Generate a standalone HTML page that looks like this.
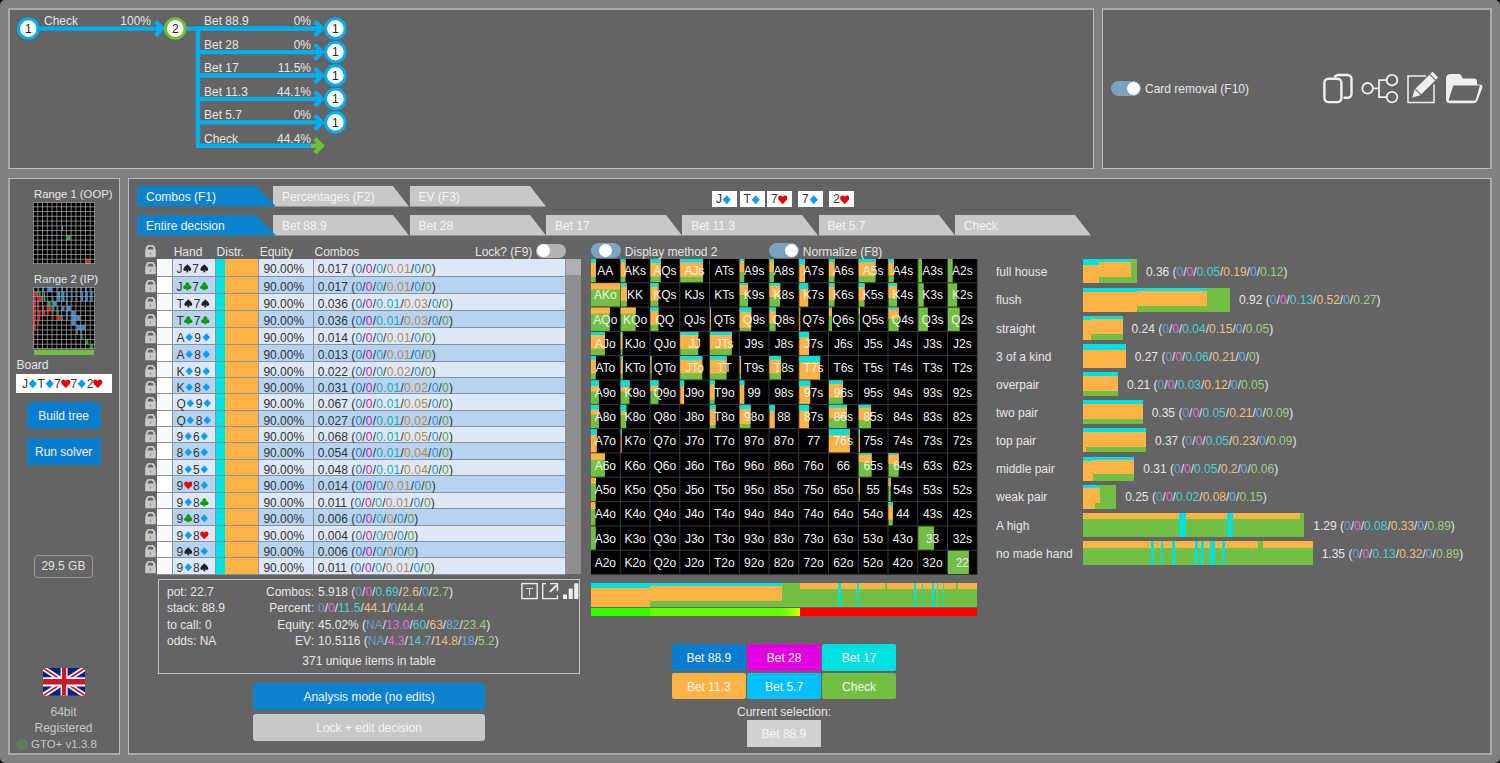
<!DOCTYPE html><html><head><meta charset="utf-8"><style>
html,body{margin:0;padding:0;}
body{width:1500px;height:763px;overflow:hidden;position:relative;background:#808080;font-family:"Liberation Sans", sans-serif;font-size:12px;color:#e6e6e6;}
div{box-sizing:border-box;}
.t{position:absolute;white-space:nowrap;line-height:14px;}
.panel{position:absolute;background:#646464;border:2px solid #a9a9a9;}
</style></head><body><div style="position:absolute;left:8px;top:8px;width:1086px;height:161px;background:#646464;border-left:2px solid #a9a9a9;border-top:2px solid #a9a9a9;border-right:1px solid #bcbcbc;border-bottom:1px solid #bcbcbc;"></div><div style="position:absolute;left:1102px;top:8px;width:390px;height:161px;background:#646464;border-left:1px solid #bcbcbc;border-top:2px solid #a9a9a9;border-right:2px solid #a9a9a9;border-bottom:1px solid #bcbcbc;"></div><div style="position:absolute;left:8px;top:178px;width:112px;height:577px;background:#646464;border-left:2px solid #a9a9a9;border-top:1px solid #bcbcbc;border-right:1px solid #bcbcbc;border-bottom:2px solid #a9a9a9;"></div><div style="position:absolute;left:128px;top:178px;width:1364px;height:577px;background:#646464;border-left:1px solid #bcbcbc;border-top:1px solid #bcbcbc;border-right:2px solid #a9a9a9;border-bottom:2px solid #a9a9a9;"></div><svg style="position:absolute;left:0;top:0" width="1500" height="763"><path d="M0 0 H5 A5 5 0 0 0 0 5 Z" fill="#000"/><path d="M1500 0 H1495 A5 5 0 0 1 1500 5 Z" fill="#000"/><path d="M1500 763 H1495 A5 5 0 0 0 1500 758 Z" fill="#000"/><path d="M0 763 H5 A5 5 0 0 1 0 758 Z" fill="#000"/></svg><svg style="position:absolute;left:0;top:0" width="1100" height="170"><line x1="38" y1="28.6" x2="162" y2="28.6" stroke="#00aeef" stroke-width="4.4"/><polyline points="155.5,21.5 162.5,28.6 155.5,35.7" fill="none" stroke="#00aeef" stroke-width="4.4" stroke-linecap="butt" stroke-linejoin="miter"/><line x1="186" y1="28.6" x2="322" y2="28.6" stroke="#00aeef" stroke-width="4.4"/><line x1="198" y1="28.6" x2="198" y2="147.8" stroke="#00aeef" stroke-width="4.4"/><line x1="196" y1="28.6" x2="320" y2="28.6" stroke="#00aeef" stroke-width="4.4"/><polyline points="314.8,21.400000000000002 321.8,28.6 314.8,35.800000000000004" fill="none" stroke="#00aeef" stroke-width="4.4" stroke-linejoin="miter"/><line x1="196" y1="52.1" x2="320" y2="52.1" stroke="#00aeef" stroke-width="4.4"/><polyline points="314.8,44.9 321.8,52.1 314.8,59.300000000000004" fill="none" stroke="#00aeef" stroke-width="4.4" stroke-linejoin="miter"/><line x1="196" y1="75.5" x2="320" y2="75.5" stroke="#00aeef" stroke-width="4.4"/><polyline points="314.8,68.3 321.8,75.5 314.8,82.7" fill="none" stroke="#00aeef" stroke-width="4.4" stroke-linejoin="miter"/><line x1="196" y1="98.9" x2="320" y2="98.9" stroke="#00aeef" stroke-width="4.4"/><polyline points="314.8,91.7 321.8,98.9 314.8,106.10000000000001" fill="none" stroke="#00aeef" stroke-width="4.4" stroke-linejoin="miter"/><line x1="196" y1="122.4" x2="320" y2="122.4" stroke="#00aeef" stroke-width="4.4"/><polyline points="314.8,115.2 321.8,122.4 314.8,129.6" fill="none" stroke="#00aeef" stroke-width="4.4" stroke-linejoin="miter"/><line x1="196" y1="145.8" x2="311" y2="145.8" stroke="#00aeef" stroke-width="4.4"/><line x1="311" y1="145.8" x2="320" y2="145.8" stroke="#6cbf3c" stroke-width="4.4"/><polyline points="314.8,138.60000000000002 321.8,145.8 314.8,153.0" fill="none" stroke="#6cbf3c" stroke-width="4.4" stroke-linejoin="miter"/><circle cx="28.3" cy="28.6" r="9.8" fill="#fff" stroke="#00aeef" stroke-width="3"/><circle cx="175.3" cy="28.6" r="9.8" fill="#fff" stroke="#6cbf3c" stroke-width="3"/><circle cx="335.4" cy="28.6" r="9.8" fill="#fff" stroke="#00aeef" stroke-width="3"/><circle cx="335.4" cy="52.1" r="9.8" fill="#fff" stroke="#00aeef" stroke-width="3"/><circle cx="335.4" cy="75.5" r="9.8" fill="#fff" stroke="#00aeef" stroke-width="3"/><circle cx="335.4" cy="98.9" r="9.8" fill="#fff" stroke="#00aeef" stroke-width="3"/><circle cx="335.4" cy="122.4" r="9.8" fill="#fff" stroke="#00aeef" stroke-width="3"/></svg><div class="t" style="left:18.3px;top:21.8px;width:20px;text-align:center;color:#222;font-size:12px;">1</div><div class="t" style="left:165.3px;top:21.8px;width:20px;text-align:center;color:#222;font-size:12px;">2</div><div class="t" style="left:325.4px;top:21.8px;width:20px;text-align:center;color:#222;font-size:12px;">1</div><div class="t" style="left:325.4px;top:45.300000000000004px;width:20px;text-align:center;color:#222;font-size:12px;">1</div><div class="t" style="left:325.4px;top:68.7px;width:20px;text-align:center;color:#222;font-size:12px;">1</div><div class="t" style="left:325.4px;top:92.10000000000001px;width:20px;text-align:center;color:#222;font-size:12px;">1</div><div class="t" style="left:325.4px;top:115.60000000000001px;width:20px;text-align:center;color:#222;font-size:12px;">1</div><div class="t" style="left:44px;top:14.2px;color:#e6e6e6;">Check</div><div class="t" style="left:100px;top:14.2px;width:51px;text-align:right;">100%</div><div class="t" style="left:204px;top:14.3px;">Bet 88.9</div><div class="t" style="left:250px;top:14.3px;width:61px;text-align:right;">0%</div><div class="t" style="left:204px;top:37.8px;">Bet 28</div><div class="t" style="left:250px;top:37.8px;width:61px;text-align:right;">0%</div><div class="t" style="left:204px;top:61.2px;">Bet 17</div><div class="t" style="left:250px;top:61.2px;width:61px;text-align:right;">11.5%</div><div class="t" style="left:204px;top:84.60000000000001px;">Bet 11.3</div><div class="t" style="left:250px;top:84.60000000000001px;width:61px;text-align:right;">44.1%</div><div class="t" style="left:204px;top:108.10000000000001px;">Bet 5.7</div><div class="t" style="left:250px;top:108.10000000000001px;width:61px;text-align:right;">0%</div><div class="t" style="left:204px;top:131.5px;">Check</div><div class="t" style="left:250px;top:131.5px;width:61px;text-align:right;">44.4%</div><div style="position:absolute;left:1110.9px;top:81.1px;width:29.7px;height:15.1px;border-radius:7.55px;background:#7aa3be;"></div><div style="position:absolute;left:1126.9px;top:82.14999999999999px;width:13px;height:13px;border-radius:50%;background:#fff;"></div><div class="t" style="left:1145px;top:82px;color:#e6e6e6;">Card removal (F10)</div><svg style="position:absolute;left:1310px;top:60px" width="185" height="55" viewBox="1310 60 185 55"><rect x="1334.3" y="75" width="17.2" height="22.8" rx="4" fill="none" stroke="#efefef" stroke-width="2.4"/><rect x="1322.5" y="77.5" width="21" height="27" rx="4.5" fill="#646464"/><rect x="1324.4" y="78.8" width="17" height="23.3" rx="4" fill="none" stroke="#efefef" stroke-width="2.4"/><circle cx="1367.6" cy="88.3" r="5.3" fill="none" stroke="#efefef" stroke-width="1.8"/><circle cx="1392" cy="80.2" r="5.3" fill="none" stroke="#efefef" stroke-width="1.8"/><circle cx="1392" cy="97.1" r="5.3" fill="none" stroke="#efefef" stroke-width="1.8"/><path d="M1372.9 88.3 H1379 M1379 79.5 V97.8 M1378.1 80.2 H1386.7 M1378.1 97.1 H1386.7" fill="none" stroke="#efefef" stroke-width="1.8"/><path d="M1426 75.9 H1408 V102.6 H1434 V84.5" fill="none" stroke="#efefef" stroke-width="1.5"/><path d="M1412.3 97.6 L1414.6 89.6 L1432.5 71.7 L1438.2 77.4 L1420.3 95.3 Z" fill="#efefef"/><path d="M1415.3 89.2 L1421 94.9" stroke="#646464" stroke-width="1.2"/><path d="M1429.8 74.4 L1435.5 80.1" stroke="#646464" stroke-width="1.2"/><path d="M1446 79 Q1446 74 1451 74 H1458.5 Q1460.5 74 1461.5 76 L1462.7 78.5 H1474 Q1477 78.5 1477 81.5 V84.5 H1479.5 Q1483.3 84.5 1482.3 88 L1477.5 100.3 Q1476.5 103.3 1473.5 103.3 H1450.5 Q1446 103.3 1446 99 Z" fill="#efefef"/><path d="M1453.3 85.5 H1480 L1475.5 100.6 H1448.5 Z" fill="#646464"/></svg><div class="t" style="left:34px;top:187px;font-size:11.3px;">Range 1 (OOP)</div><svg style="position:absolute;left:33px;top:202px" width="62" height="62"><rect x="0" y="0" width="62" height="62" fill="#000"/><rect x="33.86" y="33.38" width="3.82" height="4.77" fill="#1aaa3a"/><rect x="28.85" y="23.85" width="1.19" height="4.77" fill="#3a8ad8"/><rect x="52.94" y="57.23" width="4.05" height="4.77" fill="#e8202a"/><line x1="0.50" y1="0" x2="0.50" y2="62" stroke="#b0b0b0" stroke-width="1" opacity="0.7"/><line x1="0" y1="0.50" x2="62" y2="0.50" stroke="#b0b0b0" stroke-width="1" opacity="0.7"/><line x1="4.77" y1="0" x2="4.77" y2="62" stroke="#b0b0b0" stroke-width="1" opacity="0.7"/><line x1="0" y1="4.77" x2="62" y2="4.77" stroke="#b0b0b0" stroke-width="1" opacity="0.7"/><line x1="9.54" y1="0" x2="9.54" y2="62" stroke="#b0b0b0" stroke-width="1" opacity="0.7"/><line x1="0" y1="9.54" x2="62" y2="9.54" stroke="#b0b0b0" stroke-width="1" opacity="0.7"/><line x1="14.31" y1="0" x2="14.31" y2="62" stroke="#b0b0b0" stroke-width="1" opacity="0.7"/><line x1="0" y1="14.31" x2="62" y2="14.31" stroke="#b0b0b0" stroke-width="1" opacity="0.7"/><line x1="19.08" y1="0" x2="19.08" y2="62" stroke="#b0b0b0" stroke-width="1" opacity="0.7"/><line x1="0" y1="19.08" x2="62" y2="19.08" stroke="#b0b0b0" stroke-width="1" opacity="0.7"/><line x1="23.85" y1="0" x2="23.85" y2="62" stroke="#b0b0b0" stroke-width="1" opacity="0.7"/><line x1="0" y1="23.85" x2="62" y2="23.85" stroke="#b0b0b0" stroke-width="1" opacity="0.7"/><line x1="28.62" y1="0" x2="28.62" y2="62" stroke="#b0b0b0" stroke-width="1" opacity="0.7"/><line x1="0" y1="28.62" x2="62" y2="28.62" stroke="#b0b0b0" stroke-width="1" opacity="0.7"/><line x1="33.38" y1="0" x2="33.38" y2="62" stroke="#b0b0b0" stroke-width="1" opacity="0.7"/><line x1="0" y1="33.38" x2="62" y2="33.38" stroke="#b0b0b0" stroke-width="1" opacity="0.7"/><line x1="38.15" y1="0" x2="38.15" y2="62" stroke="#b0b0b0" stroke-width="1" opacity="0.7"/><line x1="0" y1="38.15" x2="62" y2="38.15" stroke="#b0b0b0" stroke-width="1" opacity="0.7"/><line x1="42.92" y1="0" x2="42.92" y2="62" stroke="#b0b0b0" stroke-width="1" opacity="0.7"/><line x1="0" y1="42.92" x2="62" y2="42.92" stroke="#b0b0b0" stroke-width="1" opacity="0.7"/><line x1="47.69" y1="0" x2="47.69" y2="62" stroke="#b0b0b0" stroke-width="1" opacity="0.7"/><line x1="0" y1="47.69" x2="62" y2="47.69" stroke="#b0b0b0" stroke-width="1" opacity="0.7"/><line x1="52.46" y1="0" x2="52.46" y2="62" stroke="#b0b0b0" stroke-width="1" opacity="0.7"/><line x1="0" y1="52.46" x2="62" y2="52.46" stroke="#b0b0b0" stroke-width="1" opacity="0.7"/><line x1="57.23" y1="0" x2="57.23" y2="62" stroke="#b0b0b0" stroke-width="1" opacity="0.7"/><line x1="0" y1="57.23" x2="62" y2="57.23" stroke="#b0b0b0" stroke-width="1" opacity="0.7"/><line x1="61.50" y1="0" x2="61.50" y2="62" stroke="#b0b0b0" stroke-width="1" opacity="0.7"/><line x1="0" y1="61.50" x2="62" y2="61.50" stroke="#b0b0b0" stroke-width="1" opacity="0.7"/></svg><div class="t" style="left:34px;top:272px;font-size:11.3px;">Range 2 (IP)</div><svg style="position:absolute;left:33px;top:287px" width="62" height="62"><rect x="0" y="0" width="62" height="62" fill="#000"/><rect x="0.48" y="0.00" width="0.95" height="4.77" fill="#1aaa3a"/><rect x="5.25" y="0.00" width="0.95" height="4.77" fill="#3a8ad8"/><rect x="10.02" y="0.00" width="0.95" height="4.77" fill="#3a8ad8"/><rect x="14.78" y="0.00" width="4.29" height="4.77" fill="#3a8ad8"/><rect x="24.32" y="0.00" width="0.95" height="4.77" fill="#3a8ad8"/><rect x="29.09" y="0.00" width="0.95" height="4.77" fill="#3a8ad8"/><rect x="33.86" y="0.00" width="0.95" height="4.77" fill="#3a8ad8"/><rect x="38.63" y="0.00" width="0.95" height="4.77" fill="#3a8ad8"/><rect x="43.40" y="0.00" width="0.95" height="4.77" fill="#3a8ad8"/><rect x="48.17" y="0.00" width="0.95" height="4.77" fill="#3a8ad8"/><rect x="52.94" y="0.00" width="0.95" height="4.77" fill="#3a8ad8"/><rect x="57.71" y="0.00" width="0.95" height="4.77" fill="#3a8ad8"/><rect x="0.48" y="4.77" width="3.82" height="4.77" fill="#e8202a"/><rect x="5.72" y="4.77" width="1.91" height="4.77" fill="#1aaa3a"/><rect x="10.49" y="4.77" width="1.43" height="4.77" fill="#3a8ad8"/><rect x="24.32" y="4.77" width="2.86" height="4.77" fill="#3a8ad8"/><rect x="29.09" y="4.77" width="2.38" height="4.77" fill="#3a8ad8"/><rect x="33.86" y="4.77" width="0.95" height="4.77" fill="#3a8ad8"/><rect x="38.63" y="4.77" width="0.95" height="4.77" fill="#3a8ad8"/><rect x="43.40" y="4.77" width="0.95" height="4.77" fill="#3a8ad8"/><rect x="48.17" y="4.77" width="1.91" height="4.77" fill="#3a8ad8"/><rect x="52.94" y="4.77" width="1.91" height="4.77" fill="#3a8ad8"/><rect x="57.71" y="4.77" width="1.91" height="4.77" fill="#3a8ad8"/><rect x="0.48" y="9.54" width="2.38" height="4.77" fill="#e8202a"/><rect x="5.25" y="9.54" width="3.82" height="4.77" fill="#e8202a"/><rect x="10.49" y="9.54" width="1.91" height="4.77" fill="#1aaa3a"/><rect x="19.55" y="9.54" width="0.95" height="4.77" fill="#3a8ad8"/><rect x="24.32" y="9.54" width="2.86" height="4.77" fill="#3a8ad8"/><rect x="29.09" y="9.54" width="2.38" height="4.77" fill="#3a8ad8"/><rect x="33.86" y="9.54" width="0.95" height="4.77" fill="#3a8ad8"/><rect x="38.63" y="9.54" width="0.95" height="4.77" fill="#3a8ad8"/><rect x="43.40" y="9.54" width="0.95" height="4.77" fill="#3a8ad8"/><rect x="48.17" y="9.54" width="1.91" height="4.77" fill="#3a8ad8"/><rect x="52.94" y="9.54" width="1.91" height="4.77" fill="#3a8ad8"/><rect x="57.71" y="9.54" width="1.91" height="4.77" fill="#3a8ad8"/><rect x="0.48" y="14.31" width="2.38" height="4.77" fill="#e8202a"/><rect x="5.25" y="14.31" width="0.95" height="4.77" fill="#e8202a"/><rect x="14.78" y="14.31" width="2.86" height="4.77" fill="#1aaa3a"/><rect x="19.55" y="14.31" width="3.82" height="4.77" fill="#3a8ad8"/><rect x="33.86" y="14.31" width="0.95" height="4.77" fill="#3a8ad8"/><rect x="0.48" y="19.08" width="2.38" height="4.77" fill="#e8202a"/><rect x="5.25" y="19.08" width="0.95" height="4.77" fill="#e8202a"/><rect x="10.02" y="19.08" width="0.95" height="4.77" fill="#e8202a"/><rect x="14.78" y="19.08" width="3.34" height="4.77" fill="#e8202a"/><rect x="19.55" y="19.08" width="1.91" height="4.77" fill="#1aaa3a"/><rect x="24.32" y="19.08" width="0.95" height="4.77" fill="#3a8ad8"/><rect x="29.09" y="19.08" width="2.38" height="4.77" fill="#3a8ad8"/><rect x="33.86" y="19.08" width="3.82" height="4.77" fill="#3a8ad8"/><rect x="0.48" y="23.85" width="2.38" height="4.77" fill="#e8202a"/><rect x="5.25" y="23.85" width="2.38" height="4.77" fill="#e8202a"/><rect x="10.02" y="23.85" width="2.38" height="4.77" fill="#e8202a"/><rect x="14.78" y="23.85" width="0.95" height="4.77" fill="#e8202a"/><rect x="19.55" y="23.85" width="0.95" height="4.77" fill="#e8202a"/><rect x="24.32" y="23.85" width="1.43" height="4.77" fill="#1aaa3a"/><rect x="33.86" y="23.85" width="0.95" height="4.77" fill="#3a8ad8"/><rect x="38.63" y="23.85" width="3.82" height="4.77" fill="#3a8ad8"/><rect x="0.48" y="28.62" width="2.38" height="4.77" fill="#e8202a"/><rect x="5.25" y="28.62" width="1.91" height="4.77" fill="#e8202a"/><rect x="19.55" y="28.62" width="0.95" height="4.77" fill="#e8202a"/><rect x="24.32" y="28.62" width="3.82" height="4.77" fill="#e8202a"/><rect x="29.09" y="28.62" width="0.95" height="4.77" fill="#1aaa3a"/><rect x="33.86" y="28.62" width="0.95" height="4.77" fill="#3a8ad8"/><rect x="38.63" y="28.62" width="4.29" height="4.77" fill="#3a8ad8"/><rect x="43.40" y="28.62" width="3.82" height="4.77" fill="#3a8ad8"/><rect x="0.48" y="33.38" width="1.91" height="4.77" fill="#e8202a"/><rect x="5.25" y="33.38" width="0.95" height="4.77" fill="#e8202a"/><rect x="38.63" y="33.38" width="3.82" height="4.77" fill="#3a8ad8"/><rect x="0.48" y="38.15" width="2.38" height="4.77" fill="#e8202a"/><rect x="43.40" y="38.15" width="4.29" height="4.77" fill="#3a8ad8"/><rect x="48.17" y="38.15" width="3.82" height="4.77" fill="#3a8ad8"/><rect x="0.48" y="42.92" width="0.95" height="4.77" fill="#e8202a"/><rect x="43.40" y="42.92" width="1.43" height="4.77" fill="#1aaa3a"/><rect x="48.17" y="42.92" width="0.95" height="4.77" fill="#3a8ad8"/><rect x="0.48" y="47.69" width="0.95" height="4.77" fill="#e8202a"/><rect x="48.17" y="47.69" width="1.43" height="4.77" fill="#1aaa3a"/><rect x="0.48" y="52.46" width="0.95" height="4.77" fill="#e8202a"/><rect x="52.94" y="52.46" width="2.38" height="4.77" fill="#1aaa3a"/><rect x="57.71" y="57.23" width="2.38" height="4.77" fill="#1aaa3a"/><line x1="0.50" y1="0" x2="0.50" y2="62" stroke="#b0b0b0" stroke-width="1" opacity="0.7"/><line x1="0" y1="0.50" x2="62" y2="0.50" stroke="#b0b0b0" stroke-width="1" opacity="0.7"/><line x1="4.77" y1="0" x2="4.77" y2="62" stroke="#b0b0b0" stroke-width="1" opacity="0.7"/><line x1="0" y1="4.77" x2="62" y2="4.77" stroke="#b0b0b0" stroke-width="1" opacity="0.7"/><line x1="9.54" y1="0" x2="9.54" y2="62" stroke="#b0b0b0" stroke-width="1" opacity="0.7"/><line x1="0" y1="9.54" x2="62" y2="9.54" stroke="#b0b0b0" stroke-width="1" opacity="0.7"/><line x1="14.31" y1="0" x2="14.31" y2="62" stroke="#b0b0b0" stroke-width="1" opacity="0.7"/><line x1="0" y1="14.31" x2="62" y2="14.31" stroke="#b0b0b0" stroke-width="1" opacity="0.7"/><line x1="19.08" y1="0" x2="19.08" y2="62" stroke="#b0b0b0" stroke-width="1" opacity="0.7"/><line x1="0" y1="19.08" x2="62" y2="19.08" stroke="#b0b0b0" stroke-width="1" opacity="0.7"/><line x1="23.85" y1="0" x2="23.85" y2="62" stroke="#b0b0b0" stroke-width="1" opacity="0.7"/><line x1="0" y1="23.85" x2="62" y2="23.85" stroke="#b0b0b0" stroke-width="1" opacity="0.7"/><line x1="28.62" y1="0" x2="28.62" y2="62" stroke="#b0b0b0" stroke-width="1" opacity="0.7"/><line x1="0" y1="28.62" x2="62" y2="28.62" stroke="#b0b0b0" stroke-width="1" opacity="0.7"/><line x1="33.38" y1="0" x2="33.38" y2="62" stroke="#b0b0b0" stroke-width="1" opacity="0.7"/><line x1="0" y1="33.38" x2="62" y2="33.38" stroke="#b0b0b0" stroke-width="1" opacity="0.7"/><line x1="38.15" y1="0" x2="38.15" y2="62" stroke="#b0b0b0" stroke-width="1" opacity="0.7"/><line x1="0" y1="38.15" x2="62" y2="38.15" stroke="#b0b0b0" stroke-width="1" opacity="0.7"/><line x1="42.92" y1="0" x2="42.92" y2="62" stroke="#b0b0b0" stroke-width="1" opacity="0.7"/><line x1="0" y1="42.92" x2="62" y2="42.92" stroke="#b0b0b0" stroke-width="1" opacity="0.7"/><line x1="47.69" y1="0" x2="47.69" y2="62" stroke="#b0b0b0" stroke-width="1" opacity="0.7"/><line x1="0" y1="47.69" x2="62" y2="47.69" stroke="#b0b0b0" stroke-width="1" opacity="0.7"/><line x1="52.46" y1="0" x2="52.46" y2="62" stroke="#b0b0b0" stroke-width="1" opacity="0.7"/><line x1="0" y1="52.46" x2="62" y2="52.46" stroke="#b0b0b0" stroke-width="1" opacity="0.7"/><line x1="57.23" y1="0" x2="57.23" y2="62" stroke="#b0b0b0" stroke-width="1" opacity="0.7"/><line x1="0" y1="57.23" x2="62" y2="57.23" stroke="#b0b0b0" stroke-width="1" opacity="0.7"/><line x1="61.50" y1="0" x2="61.50" y2="62" stroke="#b0b0b0" stroke-width="1" opacity="0.7"/><line x1="0" y1="61.50" x2="62" y2="61.50" stroke="#b0b0b0" stroke-width="1" opacity="0.7"/></svg><div style="position:absolute;left:33.6px;top:350.2px;width:60.5px;height:4.8px;background:#72bf44;"></div><div class="t" style="left:16.5px;top:358px;">Board</div><div style="position:absolute;left:16.4px;top:373.8px;width:95.6px;height:19.2px;background:#fff;"></div><div style="position:absolute;left:26.7px;top:402px;width:74px;height:27.2px;background:#0a7ccc;border-radius:3px;color:#f0f0f0;text-align:center;line-height:28.8px;font-size:12px;white-space:nowrap;">Build tree</div><div style="position:absolute;left:26.7px;top:437.9px;width:74px;height:27.1px;background:#0a7ccc;border-radius:3px;color:#f0f0f0;text-align:center;line-height:28.700000000000003px;font-size:12px;white-space:nowrap;">Run solver</div><div style="position:absolute;left:33.6px;top:554.5px;width:59.7px;height:23.5px;border:1px solid #9a9a9a;border-radius:4px;color:#e0e0e0;text-align:center;line-height:21.5px;">29.5 GB</div><svg style="position:absolute;left:42.8px;top:667.9px" width="42.2" height="27.7" viewBox="0 0 60 30" preserveAspectRatio="none"><clipPath id="fc"><rect width="60" height="30"/></clipPath><g clip-path="url(#fc)"><rect width="60" height="30" fill="#00247d"/><path d="M0,0 L60,30 M60,0 L0,30" stroke="#fff" stroke-width="6"/><path d="M0,0 L60,30 M60,0 L0,30" stroke="#cf142b" stroke-width="2"/><path d="M30,0 V30 M0,15 H60" stroke="#fff" stroke-width="10"/><path d="M30,0 V30 M0,15 H60" stroke="#cf142b" stroke-width="6"/></g></svg><div class="t" style="left:10px;top:705px;width:107px;text-align:center;color:#c8c8c8;">64bit</div><div class="t" style="left:10px;top:721.3px;width:107px;text-align:center;color:#c8c8c8;">Registered</div><div class="t" style="left:31px;top:737.2px;color:#c8c8c8;font-size:11.5px;">GTO+ v1.3.8</div><div style="position:absolute;left:16.1px;top:738.6px;width:11.8px;height:11.8px;border-radius:50%;background:#5d7b5d;"></div><svg style="position:absolute;left:409.5px;top:186.3px" width="136" height="20.4"><path d="M0 0 H120 L136 20.4 H0 Z" fill="#c8c8c8"/></svg><div class="t" style="left:418.5px;top:189.5px;color:#f4f4f4;">EV (F3)</div><svg style="position:absolute;left:273px;top:186.3px" width="136" height="20.4"><path d="M0 0 H120 L136 20.4 H0 Z" fill="#c8c8c8"/></svg><div class="t" style="left:282px;top:189.5px;color:#f4f4f4;">Percentages (F2)</div><svg style="position:absolute;left:137px;top:186.3px" width="139" height="20.4"><path d="M0 0 H119.5 L139 20.4 H0 Z" fill="#0a82cc"/></svg><div class="t" style="left:146px;top:189.5px;color:#f4f4f4;">Combos (F1)</div><svg style="position:absolute;left:954.8px;top:215.4px" width="136" height="20.4"><path d="M0 0 H120 L136 20.4 H0 Z" fill="#c8c8c8"/></svg><div class="t" style="left:963.8px;top:218.6px;color:#f4f4f4;">Check</div><svg style="position:absolute;left:818.5px;top:215.4px" width="136" height="20.4"><path d="M0 0 H120 L136 20.4 H0 Z" fill="#c8c8c8"/></svg><div class="t" style="left:827.5px;top:218.6px;color:#f4f4f4;">Bet 5.7</div><svg style="position:absolute;left:682.2px;top:215.4px" width="136" height="20.4"><path d="M0 0 H120 L136 20.4 H0 Z" fill="#c8c8c8"/></svg><div class="t" style="left:691.2px;top:218.6px;color:#f4f4f4;">Bet 11.3</div><svg style="position:absolute;left:546px;top:215.4px" width="136" height="20.4"><path d="M0 0 H120 L136 20.4 H0 Z" fill="#c8c8c8"/></svg><div class="t" style="left:555px;top:218.6px;color:#f4f4f4;">Bet 17</div><svg style="position:absolute;left:409.5px;top:215.4px" width="136" height="20.4"><path d="M0 0 H120 L136 20.4 H0 Z" fill="#c8c8c8"/></svg><div class="t" style="left:418.5px;top:218.6px;color:#f4f4f4;">Bet 28</div><svg style="position:absolute;left:273px;top:215.4px" width="136" height="20.4"><path d="M0 0 H120 L136 20.4 H0 Z" fill="#c8c8c8"/></svg><div class="t" style="left:282px;top:218.6px;color:#f4f4f4;">Bet 88.9</div><svg style="position:absolute;left:137px;top:215.4px" width="139" height="20.4"><path d="M0 0 H119.5 L139 20.4 H0 Z" fill="#0a82cc"/></svg><div class="t" style="left:146px;top:218.6px;color:#f4f4f4;">Entire decision</div><div style="position:absolute;left:711.9px;top:190.8px;width:25px;height:16.2px;background:#fff;"></div><div class="t" style="left:715.9px;top:192px;color:#333;">J<svg width="9.5" height="9.5" viewBox="0 0 10 10" style="vertical-align:-1px"><path d="M5 0.3 L9.3 5 L5 9.7 L0.7 5 Z" fill="#0a9bff"/></svg></div><div style="position:absolute;left:739.5px;top:190.8px;width:25px;height:16.2px;background:#fff;"></div><div class="t" style="left:743.5px;top:192px;color:#333;">T<svg width="9.5" height="9.5" viewBox="0 0 10 10" style="vertical-align:-1px"><path d="M5 0.3 L9.3 5 L5 9.7 L0.7 5 Z" fill="#0a9bff"/></svg></div><div style="position:absolute;left:766.9px;top:190.8px;width:25px;height:16.2px;background:#fff;"></div><div class="t" style="left:770.9px;top:192px;color:#333;">7<svg width="9.5" height="9.5" viewBox="0 0 10 10" style="vertical-align:-1px"><path d="M5 9.6 L1 5.4 C-0.6 3.6 0.3 0.6 2.7 0.6 C3.9 0.6 4.6 1.4 5 2.2 C5.4 1.4 6.1 0.6 7.3 0.6 C9.7 0.6 10.6 3.6 9 5.4 Z" fill="#e80000"/></svg></div><div style="position:absolute;left:798px;top:190.8px;width:25px;height:16.2px;background:#fff;"></div><div class="t" style="left:802px;top:192px;color:#333;">7<svg width="9.5" height="9.5" viewBox="0 0 10 10" style="vertical-align:-1px"><path d="M5 0.3 L9.3 5 L5 9.7 L0.7 5 Z" fill="#0a9bff"/></svg></div><div style="position:absolute;left:829.3px;top:190.8px;width:25px;height:16.2px;background:#fff;"></div><div class="t" style="left:833.3px;top:192px;color:#333;">2<svg width="9.5" height="9.5" viewBox="0 0 10 10" style="vertical-align:-1px"><path d="M5 9.6 L1 5.4 C-0.6 3.6 0.3 0.6 2.7 0.6 C3.9 0.6 4.6 1.4 5 2.2 C5.4 1.4 6.1 0.6 7.3 0.6 C9.7 0.6 10.6 3.6 9 5.4 Z" fill="#e80000"/></svg></div><div class="t" style="left:22px;top:376.5px;color:#333;">J<svg width="9.5" height="9.5" viewBox="0 0 10 10" style="vertical-align:-1px"><path d="M5 0.3 L9.3 5 L5 9.7 L0.7 5 Z" fill="#0a9bff"/></svg>T<svg width="9.5" height="9.5" viewBox="0 0 10 10" style="vertical-align:-1px"><path d="M5 0.3 L9.3 5 L5 9.7 L0.7 5 Z" fill="#0a9bff"/></svg>7<svg width="9.5" height="9.5" viewBox="0 0 10 10" style="vertical-align:-1px"><path d="M5 9.6 L1 5.4 C-0.6 3.6 0.3 0.6 2.7 0.6 C3.9 0.6 4.6 1.4 5 2.2 C5.4 1.4 6.1 0.6 7.3 0.6 C9.7 0.6 10.6 3.6 9 5.4 Z" fill="#e80000"/></svg>7<svg width="9.5" height="9.5" viewBox="0 0 10 10" style="vertical-align:-1px"><path d="M5 0.3 L9.3 5 L5 9.7 L0.7 5 Z" fill="#0a9bff"/></svg>2<svg width="9.5" height="9.5" viewBox="0 0 10 10" style="vertical-align:-1px"><path d="M5 9.6 L1 5.4 C-0.6 3.6 0.3 0.6 2.7 0.6 C3.9 0.6 4.6 1.4 5 2.2 C5.4 1.4 6.1 0.6 7.3 0.6 C9.7 0.6 10.6 3.6 9 5.4 Z" fill="#e80000"/></svg></div><svg style="position:absolute;left:145.3px;top:244.5px" width="11" height="13" viewBox="0 0 11 13"><path d="M1.6 5 V4.3 A3.9 3.9 0 0 1 9.4 4.3 V5" fill="none" stroke="#c8c8c8" stroke-width="2"/><rect x="0.2" y="4.6" width="10.6" height="7.6" rx="0.8" fill="#c8c8c8"/><rect x="5" y="7.6" width="1" height="2" fill="#777"/></svg><div class="t" style="left:173.7px;top:244.5px;">Hand</div><div class="t" style="left:216.6px;top:244.5px;">Distr.</div><div class="t" style="left:259.7px;top:244.5px;">Equity</div><div class="t" style="left:314.5px;top:244.5px;">Combos</div><div class="t" style="left:475px;top:244.5px;">Lock? (F9)</div><div style="position:absolute;left:536.4px;top:243.6px;width:29.6px;height:14.4px;border-radius:7.2px;background:#b4b4b4;"></div><div style="position:absolute;left:537.1px;top:244.29999999999998px;width:13px;height:13px;border-radius:50%;background:#fff;"></div><div style="position:absolute;left:156.6px;top:258.8px;width:409px;height:315.8px;background:#86929f;"></div><div style="position:absolute;left:156.6px;top:259px;width:15.4px;height:17px;background:#f7faff;"></div><div style="position:absolute;left:173px;top:259px;width:42px;height:17px;background:#dde8f7;"></div><div style="position:absolute;left:216.2px;top:259px;width:9.2px;height:17px;background:#00e0e0;"></div><div style="position:absolute;left:225.4px;top:259px;width:33px;height:17px;background:#ffb347;"></div><div style="position:absolute;left:259.2px;top:259px;width:53.8px;height:17px;background:#dde8f7;"></div><div style="position:absolute;left:314px;top:259px;width:251.2px;height:17px;background:#dde8f7;"></div><div class="t" style="left:176.5px;top:261.5px;color:#333;">J<span style="margin:0 0.6px"><svg width="8.6" height="8.6" viewBox="0 0 10 10" style="vertical-align:0px"><path d="M5 0.3 C6.5 2.2 9.6 3.8 9.6 6.2 C9.6 8 7.6 8.7 5.6 7.4 L6.4 9.7 H3.6 L4.4 7.4 C2.4 8.7 0.4 8 0.4 6.2 C0.4 3.8 3.5 2.2 5 0.3 Z" fill="#222"/></svg></span>7<span style="margin:0 0.6px"><svg width="8.6" height="8.6" viewBox="0 0 10 10" style="vertical-align:0px"><path d="M5 0.3 C6.5 2.2 9.6 3.8 9.6 6.2 C9.6 8 7.6 8.7 5.6 7.4 L6.4 9.7 H3.6 L4.4 7.4 C2.4 8.7 0.4 8 0.4 6.2 C0.4 3.8 3.5 2.2 5 0.3 Z" fill="#222"/></svg></span></div><div class="t" style="left:263.4px;top:261.5px;color:#333;">90.00%</div><div class="t" style="left:317.8px;top:261.5px;"><span style="color:#333">0.017 </span><span style="letter-spacing:0.2px"><span style="color:#333">(</span><span style="color:#2a78c0">0</span><span style="color:#333">/</span><span style="color:#c020c8">0</span><span style="color:#333">/</span><span style="color:#18a8b0">0</span><span style="color:#333">/</span><span style="color:#b08a50">0.01</span><span style="color:#333">/</span><span style="color:#2a90d0">0</span><span style="color:#333">/</span><span style="color:#58a040">0</span><span style="color:#333">)</span></span></div><svg style="position:absolute;left:145.3px;top:261.8px" width="11" height="13" viewBox="0 0 11 13"><path d="M1.6 5 V4.3 A3.9 3.9 0 0 1 9.4 4.3 V5" fill="none" stroke="#c8c8c8" stroke-width="2"/><rect x="0.2" y="4.6" width="10.6" height="7.6" rx="0.8" fill="#c8c8c8"/><rect x="5" y="7.6" width="1" height="2" fill="#777"/></svg><div style="position:absolute;left:156.6px;top:277px;width:15.4px;height:16px;background:#ffffff;"></div><div style="position:absolute;left:173px;top:277px;width:42px;height:16px;background:#b8d3f0;"></div><div style="position:absolute;left:216.2px;top:277px;width:9.2px;height:16px;background:#00e0e0;"></div><div style="position:absolute;left:225.4px;top:277px;width:33px;height:16px;background:#ffb347;"></div><div style="position:absolute;left:259.2px;top:277px;width:53.8px;height:16px;background:#b8d3f0;"></div><div style="position:absolute;left:314px;top:277px;width:251.2px;height:16px;background:#b8d3f0;"></div><div class="t" style="left:176.5px;top:279.5px;color:#333;">J<span style="margin:0 0.6px"><svg width="8.6" height="8.6" viewBox="0 0 10 10" style="vertical-align:0px"><circle cx="5" cy="2.7" r="2.3" fill="#0a9a0a"/><circle cx="2.5" cy="6" r="2.3" fill="#0a9a0a"/><circle cx="7.5" cy="6" r="2.3" fill="#0a9a0a"/><path d="M4.3 5 H5.7 L6.4 9.7 H3.6 Z" fill="#0a9a0a"/></svg></span>7<span style="margin:0 0.6px"><svg width="8.6" height="8.6" viewBox="0 0 10 10" style="vertical-align:0px"><circle cx="5" cy="2.7" r="2.3" fill="#0a9a0a"/><circle cx="2.5" cy="6" r="2.3" fill="#0a9a0a"/><circle cx="7.5" cy="6" r="2.3" fill="#0a9a0a"/><path d="M4.3 5 H5.7 L6.4 9.7 H3.6 Z" fill="#0a9a0a"/></svg></span></div><div class="t" style="left:263.4px;top:279.5px;color:#333;">90.00%</div><div class="t" style="left:317.8px;top:279.5px;"><span style="color:#333">0.017 </span><span style="letter-spacing:0.2px"><span style="color:#333">(</span><span style="color:#2a78c0">0</span><span style="color:#333">/</span><span style="color:#c020c8">0</span><span style="color:#333">/</span><span style="color:#18a8b0">0</span><span style="color:#333">/</span><span style="color:#b08a50">0.01</span><span style="color:#333">/</span><span style="color:#2a90d0">0</span><span style="color:#333">/</span><span style="color:#58a040">0</span><span style="color:#333">)</span></span></div><svg style="position:absolute;left:145.3px;top:279.8px" width="11" height="13" viewBox="0 0 11 13"><path d="M1.6 5 V4.3 A3.9 3.9 0 0 1 9.4 4.3 V5" fill="none" stroke="#c8c8c8" stroke-width="2"/><rect x="0.2" y="4.6" width="10.6" height="7.6" rx="0.8" fill="#c8c8c8"/><rect x="5" y="7.6" width="1" height="2" fill="#777"/></svg><div style="position:absolute;left:156.6px;top:294px;width:15.4px;height:16px;background:#f7faff;"></div><div style="position:absolute;left:173px;top:294px;width:42px;height:16px;background:#dde8f7;"></div><div style="position:absolute;left:216.2px;top:294px;width:9.2px;height:16px;background:#00e0e0;"></div><div style="position:absolute;left:225.4px;top:294px;width:33px;height:16px;background:#ffb347;"></div><div style="position:absolute;left:259.2px;top:294px;width:53.8px;height:16px;background:#dde8f7;"></div><div style="position:absolute;left:314px;top:294px;width:251.2px;height:16px;background:#dde8f7;"></div><div class="t" style="left:176.5px;top:296.5px;color:#333;">T<span style="margin:0 0.6px"><svg width="8.6" height="8.6" viewBox="0 0 10 10" style="vertical-align:0px"><path d="M5 0.3 C6.5 2.2 9.6 3.8 9.6 6.2 C9.6 8 7.6 8.7 5.6 7.4 L6.4 9.7 H3.6 L4.4 7.4 C2.4 8.7 0.4 8 0.4 6.2 C0.4 3.8 3.5 2.2 5 0.3 Z" fill="#222"/></svg></span>7<span style="margin:0 0.6px"><svg width="8.6" height="8.6" viewBox="0 0 10 10" style="vertical-align:0px"><path d="M5 0.3 C6.5 2.2 9.6 3.8 9.6 6.2 C9.6 8 7.6 8.7 5.6 7.4 L6.4 9.7 H3.6 L4.4 7.4 C2.4 8.7 0.4 8 0.4 6.2 C0.4 3.8 3.5 2.2 5 0.3 Z" fill="#222"/></svg></span></div><div class="t" style="left:263.4px;top:296.5px;color:#333;">90.00%</div><div class="t" style="left:317.8px;top:296.5px;"><span style="color:#333">0.036 </span><span style="letter-spacing:0.2px"><span style="color:#333">(</span><span style="color:#2a78c0">0</span><span style="color:#333">/</span><span style="color:#c020c8">0</span><span style="color:#333">/</span><span style="color:#18a8b0">0.01</span><span style="color:#333">/</span><span style="color:#b08a50">0.03</span><span style="color:#333">/</span><span style="color:#2a90d0">0</span><span style="color:#333">/</span><span style="color:#58a040">0</span><span style="color:#333">)</span></span></div><svg style="position:absolute;left:145.3px;top:296.8px" width="11" height="13" viewBox="0 0 11 13"><path d="M1.6 5 V4.3 A3.9 3.9 0 0 1 9.4 4.3 V5" fill="none" stroke="#c8c8c8" stroke-width="2"/><rect x="0.2" y="4.6" width="10.6" height="7.6" rx="0.8" fill="#c8c8c8"/><rect x="5" y="7.6" width="1" height="2" fill="#777"/></svg><div style="position:absolute;left:156.6px;top:311px;width:15.4px;height:16px;background:#ffffff;"></div><div style="position:absolute;left:173px;top:311px;width:42px;height:16px;background:#b8d3f0;"></div><div style="position:absolute;left:216.2px;top:311px;width:9.2px;height:16px;background:#00e0e0;"></div><div style="position:absolute;left:225.4px;top:311px;width:33px;height:16px;background:#ffb347;"></div><div style="position:absolute;left:259.2px;top:311px;width:53.8px;height:16px;background:#b8d3f0;"></div><div style="position:absolute;left:314px;top:311px;width:251.2px;height:16px;background:#b8d3f0;"></div><div class="t" style="left:176.5px;top:313.5px;color:#333;">T<span style="margin:0 0.6px"><svg width="8.6" height="8.6" viewBox="0 0 10 10" style="vertical-align:0px"><circle cx="5" cy="2.7" r="2.3" fill="#0a9a0a"/><circle cx="2.5" cy="6" r="2.3" fill="#0a9a0a"/><circle cx="7.5" cy="6" r="2.3" fill="#0a9a0a"/><path d="M4.3 5 H5.7 L6.4 9.7 H3.6 Z" fill="#0a9a0a"/></svg></span>7<span style="margin:0 0.6px"><svg width="8.6" height="8.6" viewBox="0 0 10 10" style="vertical-align:0px"><circle cx="5" cy="2.7" r="2.3" fill="#0a9a0a"/><circle cx="2.5" cy="6" r="2.3" fill="#0a9a0a"/><circle cx="7.5" cy="6" r="2.3" fill="#0a9a0a"/><path d="M4.3 5 H5.7 L6.4 9.7 H3.6 Z" fill="#0a9a0a"/></svg></span></div><div class="t" style="left:263.4px;top:313.5px;color:#333;">90.00%</div><div class="t" style="left:317.8px;top:313.5px;"><span style="color:#333">0.036 </span><span style="letter-spacing:0.2px"><span style="color:#333">(</span><span style="color:#2a78c0">0</span><span style="color:#333">/</span><span style="color:#c020c8">0</span><span style="color:#333">/</span><span style="color:#18a8b0">0.01</span><span style="color:#333">/</span><span style="color:#b08a50">0.03</span><span style="color:#333">/</span><span style="color:#2a90d0">0</span><span style="color:#333">/</span><span style="color:#58a040">0</span><span style="color:#333">)</span></span></div><svg style="position:absolute;left:145.3px;top:313.8px" width="11" height="13" viewBox="0 0 11 13"><path d="M1.6 5 V4.3 A3.9 3.9 0 0 1 9.4 4.3 V5" fill="none" stroke="#c8c8c8" stroke-width="2"/><rect x="0.2" y="4.6" width="10.6" height="7.6" rx="0.8" fill="#c8c8c8"/><rect x="5" y="7.6" width="1" height="2" fill="#777"/></svg><div style="position:absolute;left:156.6px;top:328px;width:15.4px;height:16px;background:#f7faff;"></div><div style="position:absolute;left:173px;top:328px;width:42px;height:16px;background:#dde8f7;"></div><div style="position:absolute;left:216.2px;top:328px;width:9.2px;height:16px;background:#00e0e0;"></div><div style="position:absolute;left:225.4px;top:328px;width:33px;height:16px;background:#ffb347;"></div><div style="position:absolute;left:259.2px;top:328px;width:53.8px;height:16px;background:#dde8f7;"></div><div style="position:absolute;left:314px;top:328px;width:251.2px;height:16px;background:#dde8f7;"></div><div class="t" style="left:176.5px;top:330.5px;color:#333;">A<span style="margin:0 0.6px"><svg width="8.6" height="8.6" viewBox="0 0 10 10" style="vertical-align:0px"><path d="M5 0.3 L9.3 5 L5 9.7 L0.7 5 Z" fill="#0a9bff"/></svg></span>9<span style="margin:0 0.6px"><svg width="8.6" height="8.6" viewBox="0 0 10 10" style="vertical-align:0px"><path d="M5 0.3 L9.3 5 L5 9.7 L0.7 5 Z" fill="#0a9bff"/></svg></span></div><div class="t" style="left:263.4px;top:330.5px;color:#333;">90.00%</div><div class="t" style="left:317.8px;top:330.5px;"><span style="color:#333">0.014 </span><span style="letter-spacing:0.2px"><span style="color:#333">(</span><span style="color:#2a78c0">0</span><span style="color:#333">/</span><span style="color:#c020c8">0</span><span style="color:#333">/</span><span style="color:#18a8b0">0</span><span style="color:#333">/</span><span style="color:#b08a50">0.01</span><span style="color:#333">/</span><span style="color:#2a90d0">0</span><span style="color:#333">/</span><span style="color:#58a040">0</span><span style="color:#333">)</span></span></div><svg style="position:absolute;left:145.3px;top:330.8px" width="11" height="13" viewBox="0 0 11 13"><path d="M1.6 5 V4.3 A3.9 3.9 0 0 1 9.4 4.3 V5" fill="none" stroke="#c8c8c8" stroke-width="2"/><rect x="0.2" y="4.6" width="10.6" height="7.6" rx="0.8" fill="#c8c8c8"/><rect x="5" y="7.6" width="1" height="2" fill="#777"/></svg><div style="position:absolute;left:156.6px;top:345px;width:15.4px;height:16px;background:#ffffff;"></div><div style="position:absolute;left:173px;top:345px;width:42px;height:16px;background:#b8d3f0;"></div><div style="position:absolute;left:216.2px;top:345px;width:9.2px;height:16px;background:#00e0e0;"></div><div style="position:absolute;left:225.4px;top:345px;width:33px;height:16px;background:#ffb347;"></div><div style="position:absolute;left:259.2px;top:345px;width:53.8px;height:16px;background:#b8d3f0;"></div><div style="position:absolute;left:314px;top:345px;width:251.2px;height:16px;background:#b8d3f0;"></div><div class="t" style="left:176.5px;top:347.5px;color:#333;">A<span style="margin:0 0.6px"><svg width="8.6" height="8.6" viewBox="0 0 10 10" style="vertical-align:0px"><path d="M5 0.3 L9.3 5 L5 9.7 L0.7 5 Z" fill="#0a9bff"/></svg></span>8<span style="margin:0 0.6px"><svg width="8.6" height="8.6" viewBox="0 0 10 10" style="vertical-align:0px"><path d="M5 0.3 L9.3 5 L5 9.7 L0.7 5 Z" fill="#0a9bff"/></svg></span></div><div class="t" style="left:263.4px;top:347.5px;color:#333;">90.00%</div><div class="t" style="left:317.8px;top:347.5px;"><span style="color:#333">0.013 </span><span style="letter-spacing:0.2px"><span style="color:#333">(</span><span style="color:#2a78c0">0</span><span style="color:#333">/</span><span style="color:#c020c8">0</span><span style="color:#333">/</span><span style="color:#18a8b0">0</span><span style="color:#333">/</span><span style="color:#b08a50">0.01</span><span style="color:#333">/</span><span style="color:#2a90d0">0</span><span style="color:#333">/</span><span style="color:#58a040">0</span><span style="color:#333">)</span></span></div><svg style="position:absolute;left:145.3px;top:347.8px" width="11" height="13" viewBox="0 0 11 13"><path d="M1.6 5 V4.3 A3.9 3.9 0 0 1 9.4 4.3 V5" fill="none" stroke="#c8c8c8" stroke-width="2"/><rect x="0.2" y="4.6" width="10.6" height="7.6" rx="0.8" fill="#c8c8c8"/><rect x="5" y="7.6" width="1" height="2" fill="#777"/></svg><div style="position:absolute;left:156.6px;top:362px;width:15.4px;height:15px;background:#f7faff;"></div><div style="position:absolute;left:173px;top:362px;width:42px;height:15px;background:#dde8f7;"></div><div style="position:absolute;left:216.2px;top:362px;width:9.2px;height:15px;background:#00e0e0;"></div><div style="position:absolute;left:225.4px;top:362px;width:33px;height:15px;background:#ffb347;"></div><div style="position:absolute;left:259.2px;top:362px;width:53.8px;height:15px;background:#dde8f7;"></div><div style="position:absolute;left:314px;top:362px;width:251.2px;height:15px;background:#dde8f7;"></div><div class="t" style="left:176.5px;top:364.5px;color:#333;">K<span style="margin:0 0.6px"><svg width="8.6" height="8.6" viewBox="0 0 10 10" style="vertical-align:0px"><path d="M5 0.3 L9.3 5 L5 9.7 L0.7 5 Z" fill="#0a9bff"/></svg></span>9<span style="margin:0 0.6px"><svg width="8.6" height="8.6" viewBox="0 0 10 10" style="vertical-align:0px"><path d="M5 0.3 L9.3 5 L5 9.7 L0.7 5 Z" fill="#0a9bff"/></svg></span></div><div class="t" style="left:263.4px;top:364.5px;color:#333;">90.00%</div><div class="t" style="left:317.8px;top:364.5px;"><span style="color:#333">0.022 </span><span style="letter-spacing:0.2px"><span style="color:#333">(</span><span style="color:#2a78c0">0</span><span style="color:#333">/</span><span style="color:#c020c8">0</span><span style="color:#333">/</span><span style="color:#18a8b0">0</span><span style="color:#333">/</span><span style="color:#b08a50">0.02</span><span style="color:#333">/</span><span style="color:#2a90d0">0</span><span style="color:#333">/</span><span style="color:#58a040">0</span><span style="color:#333">)</span></span></div><svg style="position:absolute;left:145.3px;top:364.8px" width="11" height="13" viewBox="0 0 11 13"><path d="M1.6 5 V4.3 A3.9 3.9 0 0 1 9.4 4.3 V5" fill="none" stroke="#c8c8c8" stroke-width="2"/><rect x="0.2" y="4.6" width="10.6" height="7.6" rx="0.8" fill="#c8c8c8"/><rect x="5" y="7.6" width="1" height="2" fill="#777"/></svg><div style="position:absolute;left:156.6px;top:378px;width:15.4px;height:15px;background:#ffffff;"></div><div style="position:absolute;left:173px;top:378px;width:42px;height:15px;background:#b8d3f0;"></div><div style="position:absolute;left:216.2px;top:378px;width:9.2px;height:15px;background:#00e0e0;"></div><div style="position:absolute;left:225.4px;top:378px;width:33px;height:15px;background:#ffb347;"></div><div style="position:absolute;left:259.2px;top:378px;width:53.8px;height:15px;background:#b8d3f0;"></div><div style="position:absolute;left:314px;top:378px;width:251.2px;height:15px;background:#b8d3f0;"></div><div class="t" style="left:176.5px;top:380.5px;color:#333;">K<span style="margin:0 0.6px"><svg width="8.6" height="8.6" viewBox="0 0 10 10" style="vertical-align:0px"><path d="M5 0.3 L9.3 5 L5 9.7 L0.7 5 Z" fill="#0a9bff"/></svg></span>8<span style="margin:0 0.6px"><svg width="8.6" height="8.6" viewBox="0 0 10 10" style="vertical-align:0px"><path d="M5 0.3 L9.3 5 L5 9.7 L0.7 5 Z" fill="#0a9bff"/></svg></span></div><div class="t" style="left:263.4px;top:380.5px;color:#333;">90.00%</div><div class="t" style="left:317.8px;top:380.5px;"><span style="color:#333">0.031 </span><span style="letter-spacing:0.2px"><span style="color:#333">(</span><span style="color:#2a78c0">0</span><span style="color:#333">/</span><span style="color:#c020c8">0</span><span style="color:#333">/</span><span style="color:#18a8b0">0.01</span><span style="color:#333">/</span><span style="color:#b08a50">0.02</span><span style="color:#333">/</span><span style="color:#2a90d0">0</span><span style="color:#333">/</span><span style="color:#58a040">0</span><span style="color:#333">)</span></span></div><svg style="position:absolute;left:145.3px;top:380.8px" width="11" height="13" viewBox="0 0 11 13"><path d="M1.6 5 V4.3 A3.9 3.9 0 0 1 9.4 4.3 V5" fill="none" stroke="#c8c8c8" stroke-width="2"/><rect x="0.2" y="4.6" width="10.6" height="7.6" rx="0.8" fill="#c8c8c8"/><rect x="5" y="7.6" width="1" height="2" fill="#777"/></svg><div style="position:absolute;left:156.6px;top:394px;width:15.4px;height:16px;background:#f7faff;"></div><div style="position:absolute;left:173px;top:394px;width:42px;height:16px;background:#dde8f7;"></div><div style="position:absolute;left:216.2px;top:394px;width:9.2px;height:16px;background:#00e0e0;"></div><div style="position:absolute;left:225.4px;top:394px;width:33px;height:16px;background:#ffb347;"></div><div style="position:absolute;left:259.2px;top:394px;width:53.8px;height:16px;background:#dde8f7;"></div><div style="position:absolute;left:314px;top:394px;width:251.2px;height:16px;background:#dde8f7;"></div><div class="t" style="left:176.5px;top:396.5px;color:#333;">Q<span style="margin:0 0.6px"><svg width="8.6" height="8.6" viewBox="0 0 10 10" style="vertical-align:0px"><path d="M5 0.3 L9.3 5 L5 9.7 L0.7 5 Z" fill="#0a9bff"/></svg></span>9<span style="margin:0 0.6px"><svg width="8.6" height="8.6" viewBox="0 0 10 10" style="vertical-align:0px"><path d="M5 0.3 L9.3 5 L5 9.7 L0.7 5 Z" fill="#0a9bff"/></svg></span></div><div class="t" style="left:263.4px;top:396.5px;color:#333;">90.00%</div><div class="t" style="left:317.8px;top:396.5px;"><span style="color:#333">0.067 </span><span style="letter-spacing:0.2px"><span style="color:#333">(</span><span style="color:#2a78c0">0</span><span style="color:#333">/</span><span style="color:#c020c8">0</span><span style="color:#333">/</span><span style="color:#18a8b0">0.01</span><span style="color:#333">/</span><span style="color:#b08a50">0.05</span><span style="color:#333">/</span><span style="color:#2a90d0">0</span><span style="color:#333">/</span><span style="color:#58a040">0</span><span style="color:#333">)</span></span></div><svg style="position:absolute;left:145.3px;top:396.8px" width="11" height="13" viewBox="0 0 11 13"><path d="M1.6 5 V4.3 A3.9 3.9 0 0 1 9.4 4.3 V5" fill="none" stroke="#c8c8c8" stroke-width="2"/><rect x="0.2" y="4.6" width="10.6" height="7.6" rx="0.8" fill="#c8c8c8"/><rect x="5" y="7.6" width="1" height="2" fill="#777"/></svg><div style="position:absolute;left:156.6px;top:411px;width:15.4px;height:15px;background:#ffffff;"></div><div style="position:absolute;left:173px;top:411px;width:42px;height:15px;background:#b8d3f0;"></div><div style="position:absolute;left:216.2px;top:411px;width:9.2px;height:15px;background:#00e0e0;"></div><div style="position:absolute;left:225.4px;top:411px;width:33px;height:15px;background:#ffb347;"></div><div style="position:absolute;left:259.2px;top:411px;width:53.8px;height:15px;background:#b8d3f0;"></div><div style="position:absolute;left:314px;top:411px;width:251.2px;height:15px;background:#b8d3f0;"></div><div class="t" style="left:176.5px;top:413.5px;color:#333;">Q<span style="margin:0 0.6px"><svg width="8.6" height="8.6" viewBox="0 0 10 10" style="vertical-align:0px"><path d="M5 0.3 L9.3 5 L5 9.7 L0.7 5 Z" fill="#0a9bff"/></svg></span>8<span style="margin:0 0.6px"><svg width="8.6" height="8.6" viewBox="0 0 10 10" style="vertical-align:0px"><path d="M5 0.3 L9.3 5 L5 9.7 L0.7 5 Z" fill="#0a9bff"/></svg></span></div><div class="t" style="left:263.4px;top:413.5px;color:#333;">90.00%</div><div class="t" style="left:317.8px;top:413.5px;"><span style="color:#333">0.027 </span><span style="letter-spacing:0.2px"><span style="color:#333">(</span><span style="color:#2a78c0">0</span><span style="color:#333">/</span><span style="color:#c020c8">0</span><span style="color:#333">/</span><span style="color:#18a8b0">0.01</span><span style="color:#333">/</span><span style="color:#b08a50">0.02</span><span style="color:#333">/</span><span style="color:#2a90d0">0</span><span style="color:#333">/</span><span style="color:#58a040">0</span><span style="color:#333">)</span></span></div><svg style="position:absolute;left:145.3px;top:413.8px" width="11" height="13" viewBox="0 0 11 13"><path d="M1.6 5 V4.3 A3.9 3.9 0 0 1 9.4 4.3 V5" fill="none" stroke="#c8c8c8" stroke-width="2"/><rect x="0.2" y="4.6" width="10.6" height="7.6" rx="0.8" fill="#c8c8c8"/><rect x="5" y="7.6" width="1" height="2" fill="#777"/></svg><div style="position:absolute;left:156.6px;top:427px;width:15.4px;height:15px;background:#f7faff;"></div><div style="position:absolute;left:173px;top:427px;width:42px;height:15px;background:#dde8f7;"></div><div style="position:absolute;left:216.2px;top:427px;width:9.2px;height:15px;background:#00e0e0;"></div><div style="position:absolute;left:225.4px;top:427px;width:33px;height:15px;background:#ffb347;"></div><div style="position:absolute;left:259.2px;top:427px;width:53.8px;height:15px;background:#dde8f7;"></div><div style="position:absolute;left:314px;top:427px;width:251.2px;height:15px;background:#dde8f7;"></div><div class="t" style="left:176.5px;top:429.5px;color:#333;">9<span style="margin:0 0.6px"><svg width="8.6" height="8.6" viewBox="0 0 10 10" style="vertical-align:0px"><path d="M5 0.3 L9.3 5 L5 9.7 L0.7 5 Z" fill="#0a9bff"/></svg></span>6<span style="margin:0 0.6px"><svg width="8.6" height="8.6" viewBox="0 0 10 10" style="vertical-align:0px"><path d="M5 0.3 L9.3 5 L5 9.7 L0.7 5 Z" fill="#0a9bff"/></svg></span></div><div class="t" style="left:263.4px;top:429.5px;color:#333;">90.00%</div><div class="t" style="left:317.8px;top:429.5px;"><span style="color:#333">0.068 </span><span style="letter-spacing:0.2px"><span style="color:#333">(</span><span style="color:#2a78c0">0</span><span style="color:#333">/</span><span style="color:#c020c8">0</span><span style="color:#333">/</span><span style="color:#18a8b0">0.01</span><span style="color:#333">/</span><span style="color:#b08a50">0.05</span><span style="color:#333">/</span><span style="color:#2a90d0">0</span><span style="color:#333">/</span><span style="color:#58a040">0</span><span style="color:#333">)</span></span></div><svg style="position:absolute;left:145.3px;top:429.8px" width="11" height="13" viewBox="0 0 11 13"><path d="M1.6 5 V4.3 A3.9 3.9 0 0 1 9.4 4.3 V5" fill="none" stroke="#c8c8c8" stroke-width="2"/><rect x="0.2" y="4.6" width="10.6" height="7.6" rx="0.8" fill="#c8c8c8"/><rect x="5" y="7.6" width="1" height="2" fill="#777"/></svg><div style="position:absolute;left:156.6px;top:443px;width:15.4px;height:16px;background:#ffffff;"></div><div style="position:absolute;left:173px;top:443px;width:42px;height:16px;background:#b8d3f0;"></div><div style="position:absolute;left:216.2px;top:443px;width:9.2px;height:16px;background:#00e0e0;"></div><div style="position:absolute;left:225.4px;top:443px;width:33px;height:16px;background:#ffb347;"></div><div style="position:absolute;left:259.2px;top:443px;width:53.8px;height:16px;background:#b8d3f0;"></div><div style="position:absolute;left:314px;top:443px;width:251.2px;height:16px;background:#b8d3f0;"></div><div class="t" style="left:176.5px;top:445.5px;color:#333;">8<span style="margin:0 0.6px"><svg width="8.6" height="8.6" viewBox="0 0 10 10" style="vertical-align:0px"><path d="M5 0.3 L9.3 5 L5 9.7 L0.7 5 Z" fill="#0a9bff"/></svg></span>6<span style="margin:0 0.6px"><svg width="8.6" height="8.6" viewBox="0 0 10 10" style="vertical-align:0px"><path d="M5 0.3 L9.3 5 L5 9.7 L0.7 5 Z" fill="#0a9bff"/></svg></span></div><div class="t" style="left:263.4px;top:445.5px;color:#333;">90.00%</div><div class="t" style="left:317.8px;top:445.5px;"><span style="color:#333">0.054 </span><span style="letter-spacing:0.2px"><span style="color:#333">(</span><span style="color:#2a78c0">0</span><span style="color:#333">/</span><span style="color:#c020c8">0</span><span style="color:#333">/</span><span style="color:#18a8b0">0.01</span><span style="color:#333">/</span><span style="color:#b08a50">0.04</span><span style="color:#333">/</span><span style="color:#2a90d0">0</span><span style="color:#333">/</span><span style="color:#58a040">0</span><span style="color:#333">)</span></span></div><svg style="position:absolute;left:145.3px;top:445.8px" width="11" height="13" viewBox="0 0 11 13"><path d="M1.6 5 V4.3 A3.9 3.9 0 0 1 9.4 4.3 V5" fill="none" stroke="#c8c8c8" stroke-width="2"/><rect x="0.2" y="4.6" width="10.6" height="7.6" rx="0.8" fill="#c8c8c8"/><rect x="5" y="7.6" width="1" height="2" fill="#777"/></svg><div style="position:absolute;left:156.6px;top:460px;width:15.4px;height:15px;background:#f7faff;"></div><div style="position:absolute;left:173px;top:460px;width:42px;height:15px;background:#dde8f7;"></div><div style="position:absolute;left:216.2px;top:460px;width:9.2px;height:15px;background:#00e0e0;"></div><div style="position:absolute;left:225.4px;top:460px;width:33px;height:15px;background:#ffb347;"></div><div style="position:absolute;left:259.2px;top:460px;width:53.8px;height:15px;background:#dde8f7;"></div><div style="position:absolute;left:314px;top:460px;width:251.2px;height:15px;background:#dde8f7;"></div><div class="t" style="left:176.5px;top:462.5px;color:#333;">8<span style="margin:0 0.6px"><svg width="8.6" height="8.6" viewBox="0 0 10 10" style="vertical-align:0px"><path d="M5 0.3 L9.3 5 L5 9.7 L0.7 5 Z" fill="#0a9bff"/></svg></span>5<span style="margin:0 0.6px"><svg width="8.6" height="8.6" viewBox="0 0 10 10" style="vertical-align:0px"><path d="M5 0.3 L9.3 5 L5 9.7 L0.7 5 Z" fill="#0a9bff"/></svg></span></div><div class="t" style="left:263.4px;top:462.5px;color:#333;">90.00%</div><div class="t" style="left:317.8px;top:462.5px;"><span style="color:#333">0.048 </span><span style="letter-spacing:0.2px"><span style="color:#333">(</span><span style="color:#2a78c0">0</span><span style="color:#333">/</span><span style="color:#c020c8">0</span><span style="color:#333">/</span><span style="color:#18a8b0">0.01</span><span style="color:#333">/</span><span style="color:#b08a50">0.04</span><span style="color:#333">/</span><span style="color:#2a90d0">0</span><span style="color:#333">/</span><span style="color:#58a040">0</span><span style="color:#333">)</span></span></div><svg style="position:absolute;left:145.3px;top:462.8px" width="11" height="13" viewBox="0 0 11 13"><path d="M1.6 5 V4.3 A3.9 3.9 0 0 1 9.4 4.3 V5" fill="none" stroke="#c8c8c8" stroke-width="2"/><rect x="0.2" y="4.6" width="10.6" height="7.6" rx="0.8" fill="#c8c8c8"/><rect x="5" y="7.6" width="1" height="2" fill="#777"/></svg><div style="position:absolute;left:156.6px;top:476px;width:15.4px;height:16px;background:#ffffff;"></div><div style="position:absolute;left:173px;top:476px;width:42px;height:16px;background:#b8d3f0;"></div><div style="position:absolute;left:216.2px;top:476px;width:9.2px;height:16px;background:#00e0e0;"></div><div style="position:absolute;left:225.4px;top:476px;width:33px;height:16px;background:#ffb347;"></div><div style="position:absolute;left:259.2px;top:476px;width:53.8px;height:16px;background:#b8d3f0;"></div><div style="position:absolute;left:314px;top:476px;width:251.2px;height:16px;background:#b8d3f0;"></div><div class="t" style="left:176.5px;top:478.5px;color:#333;">9<span style="margin:0 0.6px"><svg width="8.6" height="8.6" viewBox="0 0 10 10" style="vertical-align:0px"><path d="M5 9.6 L1 5.4 C-0.6 3.6 0.3 0.6 2.7 0.6 C3.9 0.6 4.6 1.4 5 2.2 C5.4 1.4 6.1 0.6 7.3 0.6 C9.7 0.6 10.6 3.6 9 5.4 Z" fill="#e80000"/></svg></span>8<span style="margin:0 0.6px"><svg width="8.6" height="8.6" viewBox="0 0 10 10" style="vertical-align:0px"><path d="M5 0.3 L9.3 5 L5 9.7 L0.7 5 Z" fill="#0a9bff"/></svg></span></div><div class="t" style="left:263.4px;top:478.5px;color:#333;">90.00%</div><div class="t" style="left:317.8px;top:478.5px;"><span style="color:#333">0.014 </span><span style="letter-spacing:0.2px"><span style="color:#333">(</span><span style="color:#2a78c0">0</span><span style="color:#333">/</span><span style="color:#c020c8">0</span><span style="color:#333">/</span><span style="color:#18a8b0">0</span><span style="color:#333">/</span><span style="color:#b08a50">0.01</span><span style="color:#333">/</span><span style="color:#2a90d0">0</span><span style="color:#333">/</span><span style="color:#58a040">0</span><span style="color:#333">)</span></span></div><svg style="position:absolute;left:145.3px;top:478.8px" width="11" height="13" viewBox="0 0 11 13"><path d="M1.6 5 V4.3 A3.9 3.9 0 0 1 9.4 4.3 V5" fill="none" stroke="#c8c8c8" stroke-width="2"/><rect x="0.2" y="4.6" width="10.6" height="7.6" rx="0.8" fill="#c8c8c8"/><rect x="5" y="7.6" width="1" height="2" fill="#777"/></svg><div style="position:absolute;left:156.6px;top:493px;width:15.4px;height:15px;background:#f7faff;"></div><div style="position:absolute;left:173px;top:493px;width:42px;height:15px;background:#dde8f7;"></div><div style="position:absolute;left:216.2px;top:493px;width:9.2px;height:15px;background:#00e0e0;"></div><div style="position:absolute;left:225.4px;top:493px;width:33px;height:15px;background:#ffb347;"></div><div style="position:absolute;left:259.2px;top:493px;width:53.8px;height:15px;background:#dde8f7;"></div><div style="position:absolute;left:314px;top:493px;width:251.2px;height:15px;background:#dde8f7;"></div><div class="t" style="left:176.5px;top:495.5px;color:#333;">9<span style="margin:0 0.6px"><svg width="8.6" height="8.6" viewBox="0 0 10 10" style="vertical-align:0px"><path d="M5 0.3 L9.3 5 L5 9.7 L0.7 5 Z" fill="#0a9bff"/></svg></span>8<span style="margin:0 0.6px"><svg width="8.6" height="8.6" viewBox="0 0 10 10" style="vertical-align:0px"><circle cx="5" cy="2.7" r="2.3" fill="#0a9a0a"/><circle cx="2.5" cy="6" r="2.3" fill="#0a9a0a"/><circle cx="7.5" cy="6" r="2.3" fill="#0a9a0a"/><path d="M4.3 5 H5.7 L6.4 9.7 H3.6 Z" fill="#0a9a0a"/></svg></span></div><div class="t" style="left:263.4px;top:495.5px;color:#333;">90.00%</div><div class="t" style="left:317.8px;top:495.5px;"><span style="color:#333">0.011 </span><span style="letter-spacing:0.2px"><span style="color:#333">(</span><span style="color:#2a78c0">0</span><span style="color:#333">/</span><span style="color:#c020c8">0</span><span style="color:#333">/</span><span style="color:#18a8b0">0</span><span style="color:#333">/</span><span style="color:#b08a50">0.01</span><span style="color:#333">/</span><span style="color:#2a90d0">0</span><span style="color:#333">/</span><span style="color:#58a040">0</span><span style="color:#333">)</span></span></div><svg style="position:absolute;left:145.3px;top:495.8px" width="11" height="13" viewBox="0 0 11 13"><path d="M1.6 5 V4.3 A3.9 3.9 0 0 1 9.4 4.3 V5" fill="none" stroke="#c8c8c8" stroke-width="2"/><rect x="0.2" y="4.6" width="10.6" height="7.6" rx="0.8" fill="#c8c8c8"/><rect x="5" y="7.6" width="1" height="2" fill="#777"/></svg><div style="position:absolute;left:156.6px;top:509px;width:15.4px;height:16px;background:#ffffff;"></div><div style="position:absolute;left:173px;top:509px;width:42px;height:16px;background:#b8d3f0;"></div><div style="position:absolute;left:216.2px;top:509px;width:9.2px;height:16px;background:#00e0e0;"></div><div style="position:absolute;left:225.4px;top:509px;width:33px;height:16px;background:#ffb347;"></div><div style="position:absolute;left:259.2px;top:509px;width:53.8px;height:16px;background:#b8d3f0;"></div><div style="position:absolute;left:314px;top:509px;width:251.2px;height:16px;background:#b8d3f0;"></div><div class="t" style="left:176.5px;top:511.5px;color:#333;">9<span style="margin:0 0.6px"><svg width="8.6" height="8.6" viewBox="0 0 10 10" style="vertical-align:0px"><circle cx="5" cy="2.7" r="2.3" fill="#0a9a0a"/><circle cx="2.5" cy="6" r="2.3" fill="#0a9a0a"/><circle cx="7.5" cy="6" r="2.3" fill="#0a9a0a"/><path d="M4.3 5 H5.7 L6.4 9.7 H3.6 Z" fill="#0a9a0a"/></svg></span>8<span style="margin:0 0.6px"><svg width="8.6" height="8.6" viewBox="0 0 10 10" style="vertical-align:0px"><path d="M5 0.3 L9.3 5 L5 9.7 L0.7 5 Z" fill="#0a9bff"/></svg></span></div><div class="t" style="left:263.4px;top:511.5px;color:#333;">90.00%</div><div class="t" style="left:317.8px;top:511.5px;"><span style="color:#333">0.006 </span><span style="letter-spacing:0.2px"><span style="color:#333">(</span><span style="color:#2a78c0">0</span><span style="color:#333">/</span><span style="color:#c020c8">0</span><span style="color:#333">/</span><span style="color:#18a8b0">0</span><span style="color:#333">/</span><span style="color:#b08a50">0</span><span style="color:#333">/</span><span style="color:#2a90d0">0</span><span style="color:#333">/</span><span style="color:#58a040">0</span><span style="color:#333">)</span></span></div><svg style="position:absolute;left:145.3px;top:511.8px" width="11" height="13" viewBox="0 0 11 13"><path d="M1.6 5 V4.3 A3.9 3.9 0 0 1 9.4 4.3 V5" fill="none" stroke="#c8c8c8" stroke-width="2"/><rect x="0.2" y="4.6" width="10.6" height="7.6" rx="0.8" fill="#c8c8c8"/><rect x="5" y="7.6" width="1" height="2" fill="#777"/></svg><div style="position:absolute;left:156.6px;top:526px;width:15.4px;height:15px;background:#f7faff;"></div><div style="position:absolute;left:173px;top:526px;width:42px;height:15px;background:#dde8f7;"></div><div style="position:absolute;left:216.2px;top:526px;width:9.2px;height:15px;background:#00e0e0;"></div><div style="position:absolute;left:225.4px;top:526px;width:33px;height:15px;background:#ffb347;"></div><div style="position:absolute;left:259.2px;top:526px;width:53.8px;height:15px;background:#dde8f7;"></div><div style="position:absolute;left:314px;top:526px;width:251.2px;height:15px;background:#dde8f7;"></div><div class="t" style="left:176.5px;top:528.5px;color:#333;">9<span style="margin:0 0.6px"><svg width="8.6" height="8.6" viewBox="0 0 10 10" style="vertical-align:0px"><path d="M5 0.3 L9.3 5 L5 9.7 L0.7 5 Z" fill="#0a9bff"/></svg></span>8<span style="margin:0 0.6px"><svg width="8.6" height="8.6" viewBox="0 0 10 10" style="vertical-align:0px"><path d="M5 9.6 L1 5.4 C-0.6 3.6 0.3 0.6 2.7 0.6 C3.9 0.6 4.6 1.4 5 2.2 C5.4 1.4 6.1 0.6 7.3 0.6 C9.7 0.6 10.6 3.6 9 5.4 Z" fill="#e80000"/></svg></span></div><div class="t" style="left:263.4px;top:528.5px;color:#333;">90.00%</div><div class="t" style="left:317.8px;top:528.5px;"><span style="color:#333">0.004 </span><span style="letter-spacing:0.2px"><span style="color:#333">(</span><span style="color:#2a78c0">0</span><span style="color:#333">/</span><span style="color:#c020c8">0</span><span style="color:#333">/</span><span style="color:#18a8b0">0</span><span style="color:#333">/</span><span style="color:#b08a50">0</span><span style="color:#333">/</span><span style="color:#2a90d0">0</span><span style="color:#333">/</span><span style="color:#58a040">0</span><span style="color:#333">)</span></span></div><svg style="position:absolute;left:145.3px;top:528.8px" width="11" height="13" viewBox="0 0 11 13"><path d="M1.6 5 V4.3 A3.9 3.9 0 0 1 9.4 4.3 V5" fill="none" stroke="#c8c8c8" stroke-width="2"/><rect x="0.2" y="4.6" width="10.6" height="7.6" rx="0.8" fill="#c8c8c8"/><rect x="5" y="7.6" width="1" height="2" fill="#777"/></svg><div style="position:absolute;left:156.6px;top:542px;width:15.4px;height:15px;background:#ffffff;"></div><div style="position:absolute;left:173px;top:542px;width:42px;height:15px;background:#b8d3f0;"></div><div style="position:absolute;left:216.2px;top:542px;width:9.2px;height:15px;background:#00e0e0;"></div><div style="position:absolute;left:225.4px;top:542px;width:33px;height:15px;background:#ffb347;"></div><div style="position:absolute;left:259.2px;top:542px;width:53.8px;height:15px;background:#b8d3f0;"></div><div style="position:absolute;left:314px;top:542px;width:251.2px;height:15px;background:#b8d3f0;"></div><div class="t" style="left:176.5px;top:544.5px;color:#333;">9<span style="margin:0 0.6px"><svg width="8.6" height="8.6" viewBox="0 0 10 10" style="vertical-align:0px"><path d="M5 0.3 C6.5 2.2 9.6 3.8 9.6 6.2 C9.6 8 7.6 8.7 5.6 7.4 L6.4 9.7 H3.6 L4.4 7.4 C2.4 8.7 0.4 8 0.4 6.2 C0.4 3.8 3.5 2.2 5 0.3 Z" fill="#222"/></svg></span>8<span style="margin:0 0.6px"><svg width="8.6" height="8.6" viewBox="0 0 10 10" style="vertical-align:0px"><path d="M5 0.3 L9.3 5 L5 9.7 L0.7 5 Z" fill="#0a9bff"/></svg></span></div><div class="t" style="left:263.4px;top:544.5px;color:#333;">90.00%</div><div class="t" style="left:317.8px;top:544.5px;"><span style="color:#333">0.006 </span><span style="letter-spacing:0.2px"><span style="color:#333">(</span><span style="color:#2a78c0">0</span><span style="color:#333">/</span><span style="color:#c020c8">0</span><span style="color:#333">/</span><span style="color:#18a8b0">0</span><span style="color:#333">/</span><span style="color:#b08a50">0</span><span style="color:#333">/</span><span style="color:#2a90d0">0</span><span style="color:#333">/</span><span style="color:#58a040">0</span><span style="color:#333">)</span></span></div><svg style="position:absolute;left:145.3px;top:544.8px" width="11" height="13" viewBox="0 0 11 13"><path d="M1.6 5 V4.3 A3.9 3.9 0 0 1 9.4 4.3 V5" fill="none" stroke="#c8c8c8" stroke-width="2"/><rect x="0.2" y="4.6" width="10.6" height="7.6" rx="0.8" fill="#c8c8c8"/><rect x="5" y="7.6" width="1" height="2" fill="#777"/></svg><div style="position:absolute;left:156.6px;top:558px;width:15.4px;height:16px;background:#f7faff;"></div><div style="position:absolute;left:173px;top:558px;width:42px;height:16px;background:#dde8f7;"></div><div style="position:absolute;left:216.2px;top:558px;width:9.2px;height:16px;background:#00e0e0;"></div><div style="position:absolute;left:225.4px;top:558px;width:33px;height:16px;background:#ffb347;"></div><div style="position:absolute;left:259.2px;top:558px;width:53.8px;height:16px;background:#dde8f7;"></div><div style="position:absolute;left:314px;top:558px;width:251.2px;height:16px;background:#dde8f7;"></div><div class="t" style="left:176.5px;top:560.5px;color:#333;">9<span style="margin:0 0.6px"><svg width="8.6" height="8.6" viewBox="0 0 10 10" style="vertical-align:0px"><path d="M5 0.3 L9.3 5 L5 9.7 L0.7 5 Z" fill="#0a9bff"/></svg></span>8<span style="margin:0 0.6px"><svg width="8.6" height="8.6" viewBox="0 0 10 10" style="vertical-align:0px"><path d="M5 0.3 C6.5 2.2 9.6 3.8 9.6 6.2 C9.6 8 7.6 8.7 5.6 7.4 L6.4 9.7 H3.6 L4.4 7.4 C2.4 8.7 0.4 8 0.4 6.2 C0.4 3.8 3.5 2.2 5 0.3 Z" fill="#222"/></svg></span></div><div class="t" style="left:263.4px;top:560.5px;color:#333;">90.00%</div><div class="t" style="left:317.8px;top:560.5px;"><span style="color:#333">0.011 </span><span style="letter-spacing:0.2px"><span style="color:#333">(</span><span style="color:#2a78c0">0</span><span style="color:#333">/</span><span style="color:#c020c8">0</span><span style="color:#333">/</span><span style="color:#18a8b0">0</span><span style="color:#333">/</span><span style="color:#b08a50">0.01</span><span style="color:#333">/</span><span style="color:#2a90d0">0</span><span style="color:#333">/</span><span style="color:#58a040">0</span><span style="color:#333">)</span></span></div><svg style="position:absolute;left:145.3px;top:560.8px" width="11" height="13" viewBox="0 0 11 13"><path d="M1.6 5 V4.3 A3.9 3.9 0 0 1 9.4 4.3 V5" fill="none" stroke="#c8c8c8" stroke-width="2"/><rect x="0.2" y="4.6" width="10.6" height="7.6" rx="0.8" fill="#c8c8c8"/><rect x="5" y="7.6" width="1" height="2" fill="#777"/></svg><div style="position:absolute;left:565.5px;top:258.8px;width:15.5px;height:315.3px;background:#8e8e8e;"></div><div style="position:absolute;left:565.5px;top:258.8px;width:15.5px;height:16.5px;background:#b0b0b0;"></div><svg style="position:absolute;left:591.0px;top:258.9px" width="387.8" height="317.0"><rect x="0" y="0" width="386.75" height="316.03" fill="#3a3a3a"/><rect x="0.00" y="0.00" width="28.75" height="23.31" fill="#000"/><rect x="0.00" y="0.00" width="4.80" height="23.31" fill="#72bf44"/><rect x="0.00" y="0.00" width="4.80" height="17.70" fill="#ffb347"/><rect x="0.00" y="0.00" width="4.80" height="3.70" fill="#00e0e0"/><rect x="29.75" y="0.00" width="28.75" height="23.31" fill="#000"/><rect x="29.75" y="0.00" width="4.80" height="23.31" fill="#72bf44"/><rect x="29.75" y="0.00" width="4.80" height="17.80" fill="#ffb347"/><rect x="29.75" y="0.00" width="4.80" height="3.40" fill="#00e0e0"/><rect x="59.50" y="0.00" width="28.75" height="23.31" fill="#000"/><rect x="59.50" y="0.00" width="10.30" height="23.31" fill="#72bf44"/><rect x="59.50" y="0.00" width="10.30" height="17.70" fill="#ffb347"/><rect x="59.50" y="0.00" width="10.30" height="3.70" fill="#00e0e0"/><rect x="89.25" y="0.00" width="28.75" height="23.31" fill="#000"/><rect x="89.25" y="0.00" width="22.80" height="23.31" fill="#72bf44"/><rect x="89.25" y="0.00" width="22.80" height="17.80" fill="#ffb347"/><rect x="89.25" y="0.00" width="22.80" height="3.40" fill="#00e0e0"/><rect x="119.00" y="0.00" width="28.75" height="23.31" fill="#000"/><rect x="148.75" y="0.00" width="28.75" height="23.31" fill="#000"/><rect x="148.75" y="0.00" width="4.50" height="23.31" fill="#72bf44"/><rect x="148.75" y="0.00" width="4.50" height="13.00" fill="#ffb347"/><rect x="148.75" y="0.00" width="4.50" height="2.00" fill="#00e0e0"/><rect x="178.50" y="0.00" width="28.75" height="23.31" fill="#000"/><rect x="178.50" y="0.00" width="4.40" height="23.31" fill="#72bf44"/><rect x="178.50" y="0.00" width="4.40" height="13.00" fill="#ffb347"/><rect x="178.50" y="0.00" width="4.40" height="2.00" fill="#00e0e0"/><rect x="208.25" y="0.00" width="28.75" height="23.31" fill="#000"/><rect x="208.25" y="0.00" width="5.80" height="23.31" fill="#ffb347"/><rect x="208.25" y="0.00" width="5.80" height="5.40" fill="#00e0e0"/><rect x="238.00" y="0.00" width="28.75" height="23.31" fill="#000"/><rect x="238.00" y="0.00" width="5.50" height="23.31" fill="#72bf44"/><rect x="238.00" y="0.00" width="5.50" height="17.30" fill="#ffb347"/><rect x="238.00" y="0.00" width="5.50" height="3.30" fill="#00e0e0"/><rect x="267.75" y="0.00" width="28.75" height="23.31" fill="#000"/><rect x="267.75" y="0.00" width="16.80" height="23.31" fill="#72bf44"/><rect x="267.75" y="0.00" width="16.80" height="17.30" fill="#ffb347"/><rect x="267.75" y="0.00" width="16.80" height="3.30" fill="#00e0e0"/><rect x="297.50" y="0.00" width="28.75" height="23.31" fill="#000"/><rect x="297.50" y="0.00" width="5.30" height="23.31" fill="#72bf44"/><rect x="297.50" y="0.00" width="5.30" height="16.10" fill="#ffb347"/><rect x="297.50" y="0.00" width="5.30" height="3.30" fill="#00e0e0"/><rect x="327.25" y="0.00" width="28.75" height="23.31" fill="#000"/><rect x="327.25" y="0.00" width="3.80" height="23.31" fill="#72bf44"/><rect x="357.00" y="0.00" width="28.75" height="23.31" fill="#000"/><rect x="357.00" y="0.00" width="4.70" height="23.31" fill="#72bf44"/><rect x="0.00" y="24.31" width="28.75" height="23.31" fill="#000"/><rect x="0.00" y="24.31" width="29.00" height="23.31" fill="#72bf44"/><rect x="0.00" y="24.31" width="29.00" height="6.00" fill="#ffb347"/><rect x="29.75" y="24.31" width="28.75" height="23.31" fill="#000"/><rect x="29.75" y="24.31" width="6.20" height="23.31" fill="#72bf44"/><rect x="29.75" y="24.31" width="6.20" height="17.40" fill="#ffb347"/><rect x="29.75" y="24.31" width="6.20" height="3.40" fill="#00e0e0"/><rect x="59.50" y="24.31" width="28.75" height="23.31" fill="#000"/><rect x="59.50" y="24.31" width="7.90" height="23.31" fill="#72bf44"/><rect x="59.50" y="24.31" width="7.90" height="17.40" fill="#ffb347"/><rect x="59.50" y="24.31" width="7.90" height="3.40" fill="#00e0e0"/><rect x="89.25" y="24.31" width="28.75" height="23.31" fill="#000"/><rect x="119.00" y="24.31" width="28.75" height="23.31" fill="#000"/><rect x="148.75" y="24.31" width="28.75" height="23.31" fill="#000"/><rect x="148.75" y="24.31" width="8.30" height="23.31" fill="#72bf44"/><rect x="148.75" y="24.31" width="8.30" height="11.70" fill="#ffb347"/><rect x="148.75" y="24.31" width="8.30" height="1.70" fill="#00e0e0"/><rect x="178.50" y="24.31" width="28.75" height="23.31" fill="#000"/><rect x="178.50" y="24.31" width="10.70" height="23.31" fill="#72bf44"/><rect x="178.50" y="24.31" width="10.70" height="13.70" fill="#ffb347"/><rect x="178.50" y="24.31" width="10.70" height="2.40" fill="#00e0e0"/><rect x="208.25" y="24.31" width="28.75" height="23.31" fill="#000"/><rect x="208.25" y="24.31" width="9.00" height="23.31" fill="#ffb347"/><rect x="208.25" y="24.31" width="9.00" height="5.80" fill="#00e0e0"/><rect x="238.00" y="24.31" width="28.75" height="23.31" fill="#000"/><rect x="238.00" y="24.31" width="5.50" height="23.31" fill="#72bf44"/><rect x="238.00" y="24.31" width="5.50" height="17.10" fill="#ffb347"/><rect x="238.00" y="24.31" width="5.50" height="3.40" fill="#00e0e0"/><rect x="267.75" y="24.31" width="28.75" height="23.31" fill="#000"/><rect x="267.75" y="24.31" width="5.80" height="23.31" fill="#72bf44"/><rect x="267.75" y="24.31" width="5.80" height="17.10" fill="#ffb347"/><rect x="267.75" y="24.31" width="5.80" height="3.40" fill="#00e0e0"/><rect x="297.50" y="24.31" width="28.75" height="23.31" fill="#000"/><rect x="297.50" y="24.31" width="8.60" height="23.31" fill="#72bf44"/><rect x="297.50" y="24.31" width="8.60" height="14.70" fill="#ffb347"/><rect x="297.50" y="24.31" width="8.60" height="2.80" fill="#00e0e0"/><rect x="327.25" y="24.31" width="28.75" height="23.31" fill="#000"/><rect x="327.25" y="24.31" width="5.50" height="23.31" fill="#72bf44"/><rect x="357.00" y="24.31" width="28.75" height="23.31" fill="#000"/><rect x="357.00" y="24.31" width="9.20" height="23.31" fill="#72bf44"/><rect x="0.00" y="48.62" width="28.75" height="23.31" fill="#000"/><rect x="0.00" y="48.62" width="18.80" height="23.31" fill="#72bf44"/><rect x="0.00" y="48.62" width="18.80" height="6.00" fill="#ffb347"/><rect x="29.75" y="48.62" width="28.75" height="23.31" fill="#000"/><rect x="29.75" y="48.62" width="14.90" height="23.31" fill="#72bf44"/><rect x="29.75" y="48.62" width="14.90" height="6.00" fill="#ffb347"/><rect x="59.50" y="48.62" width="28.75" height="23.31" fill="#000"/><rect x="59.50" y="48.62" width="7.90" height="23.31" fill="#72bf44"/><rect x="59.50" y="48.62" width="7.90" height="17.20" fill="#ffb347"/><rect x="59.50" y="48.62" width="7.90" height="3.20" fill="#00e0e0"/><rect x="89.25" y="48.62" width="28.75" height="23.31" fill="#000"/><rect x="119.00" y="48.62" width="28.75" height="23.31" fill="#000"/><rect x="119.00" y="48.62" width="1.00" height="23.31" fill="#72bf44"/><rect x="119.00" y="48.62" width="1.00" height="17.00" fill="#ffb347"/><rect x="119.00" y="48.62" width="1.00" height="3.00" fill="#00e0e0"/><rect x="148.75" y="48.62" width="28.75" height="23.31" fill="#000"/><rect x="148.75" y="48.62" width="11.50" height="23.31" fill="#72bf44"/><rect x="148.75" y="48.62" width="11.50" height="20.20" fill="#ffb347"/><rect x="148.75" y="48.62" width="11.50" height="4.20" fill="#00e0e0"/><rect x="178.50" y="48.62" width="28.75" height="23.31" fill="#000"/><rect x="178.50" y="48.62" width="6.20" height="23.31" fill="#72bf44"/><rect x="178.50" y="48.62" width="6.20" height="15.90" fill="#ffb347"/><rect x="178.50" y="48.62" width="6.20" height="3.20" fill="#00e0e0"/><rect x="208.25" y="48.62" width="28.75" height="23.31" fill="#000"/><rect x="208.25" y="48.62" width="1.00" height="23.31" fill="#ffb347"/><rect x="208.25" y="48.62" width="1.00" height="3.00" fill="#00e0e0"/><rect x="238.00" y="48.62" width="28.75" height="23.31" fill="#000"/><rect x="238.00" y="48.62" width="3.00" height="23.31" fill="#72bf44"/><rect x="238.00" y="48.62" width="3.00" height="8.60" fill="#ffb347"/><rect x="238.00" y="48.62" width="3.00" height="1.20" fill="#00e0e0"/><rect x="267.75" y="48.62" width="28.75" height="23.31" fill="#000"/><rect x="267.75" y="48.62" width="1.20" height="23.31" fill="#72bf44"/><rect x="267.75" y="48.62" width="1.20" height="6.00" fill="#ffb347"/><rect x="297.50" y="48.62" width="28.75" height="23.31" fill="#000"/><rect x="297.50" y="48.62" width="10.20" height="23.31" fill="#72bf44"/><rect x="297.50" y="48.62" width="10.20" height="11.00" fill="#ffb347"/><rect x="297.50" y="48.62" width="10.20" height="1.80" fill="#00e0e0"/><rect x="327.25" y="48.62" width="28.75" height="23.31" fill="#000"/><rect x="327.25" y="48.62" width="9.60" height="23.31" fill="#72bf44"/><rect x="357.00" y="48.62" width="28.75" height="23.31" fill="#000"/><rect x="357.00" y="48.62" width="11.70" height="23.31" fill="#72bf44"/><rect x="0.00" y="72.93" width="28.75" height="23.31" fill="#000"/><rect x="0.00" y="72.93" width="13.90" height="23.31" fill="#72bf44"/><rect x="0.00" y="72.93" width="13.90" height="17.00" fill="#ffb347"/><rect x="0.00" y="72.93" width="13.90" height="3.00" fill="#00e0e0"/><rect x="29.75" y="72.93" width="28.75" height="23.31" fill="#000"/><rect x="29.75" y="72.93" width="1.70" height="23.31" fill="#72bf44"/><rect x="29.75" y="72.93" width="1.70" height="17.00" fill="#ffb347"/><rect x="29.75" y="72.93" width="1.70" height="3.00" fill="#00e0e0"/><rect x="59.50" y="72.93" width="28.75" height="23.31" fill="#000"/><rect x="89.25" y="72.93" width="28.75" height="23.31" fill="#000"/><rect x="89.25" y="72.93" width="18.00" height="23.31" fill="#72bf44"/><rect x="89.25" y="72.93" width="18.00" height="17.00" fill="#ffb347"/><rect x="89.25" y="72.93" width="18.00" height="3.00" fill="#00e0e0"/><rect x="119.00" y="72.93" width="28.75" height="23.31" fill="#000"/><rect x="119.00" y="72.93" width="21.80" height="23.31" fill="#72bf44"/><rect x="119.00" y="72.93" width="21.80" height="17.00" fill="#ffb347"/><rect x="119.00" y="72.93" width="21.80" height="3.00" fill="#00e0e0"/><rect x="148.75" y="72.93" width="28.75" height="23.31" fill="#000"/><rect x="178.50" y="72.93" width="28.75" height="23.31" fill="#000"/><rect x="208.25" y="72.93" width="28.75" height="23.31" fill="#000"/><rect x="208.25" y="72.93" width="9.80" height="23.31" fill="#ffb347"/><rect x="208.25" y="72.93" width="9.80" height="5.50" fill="#00e0e0"/><rect x="238.00" y="72.93" width="28.75" height="23.31" fill="#000"/><rect x="267.75" y="72.93" width="28.75" height="23.31" fill="#000"/><rect x="297.50" y="72.93" width="28.75" height="23.31" fill="#000"/><rect x="327.25" y="72.93" width="28.75" height="23.31" fill="#000"/><rect x="357.00" y="72.93" width="28.75" height="23.31" fill="#000"/><rect x="0.00" y="97.24" width="28.75" height="23.31" fill="#000"/><rect x="0.00" y="97.24" width="4.80" height="23.31" fill="#72bf44"/><rect x="0.00" y="97.24" width="4.80" height="17.10" fill="#ffb347"/><rect x="0.00" y="97.24" width="4.80" height="3.50" fill="#00e0e0"/><rect x="29.75" y="97.24" width="28.75" height="23.31" fill="#000"/><rect x="29.75" y="97.24" width="2.00" height="23.31" fill="#72bf44"/><rect x="29.75" y="97.24" width="2.00" height="17.10" fill="#ffb347"/><rect x="29.75" y="97.24" width="2.00" height="3.50" fill="#00e0e0"/><rect x="59.50" y="97.24" width="28.75" height="23.31" fill="#000"/><rect x="59.50" y="97.24" width="1.00" height="23.31" fill="#72bf44"/><rect x="59.50" y="97.24" width="1.00" height="17.10" fill="#ffb347"/><rect x="59.50" y="97.24" width="1.00" height="3.50" fill="#00e0e0"/><rect x="89.25" y="97.24" width="28.75" height="23.31" fill="#000"/><rect x="89.25" y="97.24" width="22.00" height="23.31" fill="#72bf44"/><rect x="89.25" y="97.24" width="22.00" height="17.10" fill="#ffb347"/><rect x="89.25" y="97.24" width="22.00" height="3.50" fill="#00e0e0"/><rect x="119.00" y="97.24" width="28.75" height="23.31" fill="#000"/><rect x="119.00" y="97.24" width="16.60" height="23.31" fill="#72bf44"/><rect x="119.00" y="97.24" width="16.60" height="17.10" fill="#ffb347"/><rect x="119.00" y="97.24" width="16.60" height="3.50" fill="#00e0e0"/><rect x="148.75" y="97.24" width="28.75" height="23.31" fill="#000"/><rect x="148.75" y="97.24" width="1.30" height="23.31" fill="#72bf44"/><rect x="148.75" y="97.24" width="1.30" height="17.10" fill="#ffb347"/><rect x="148.75" y="97.24" width="1.30" height="3.50" fill="#00e0e0"/><rect x="178.50" y="97.24" width="28.75" height="23.31" fill="#000"/><rect x="178.50" y="97.24" width="11.50" height="23.31" fill="#72bf44"/><rect x="178.50" y="97.24" width="11.50" height="17.10" fill="#ffb347"/><rect x="178.50" y="97.24" width="11.50" height="3.50" fill="#00e0e0"/><rect x="208.25" y="97.24" width="28.75" height="23.31" fill="#000"/><rect x="208.25" y="97.24" width="20.90" height="23.31" fill="#ffb347"/><rect x="208.25" y="97.24" width="20.90" height="5.80" fill="#00e0e0"/><rect x="238.00" y="97.24" width="28.75" height="23.31" fill="#000"/><rect x="267.75" y="97.24" width="28.75" height="23.31" fill="#000"/><rect x="297.50" y="97.24" width="28.75" height="23.31" fill="#000"/><rect x="327.25" y="97.24" width="28.75" height="23.31" fill="#000"/><rect x="357.00" y="97.24" width="28.75" height="23.31" fill="#000"/><rect x="0.00" y="121.55" width="28.75" height="23.31" fill="#000"/><rect x="0.00" y="121.55" width="7.90" height="23.31" fill="#72bf44"/><rect x="0.00" y="121.55" width="7.90" height="11.10" fill="#ffb347"/><rect x="0.00" y="121.55" width="7.90" height="5.50" fill="#00e0e0"/><rect x="29.75" y="121.55" width="28.75" height="23.31" fill="#000"/><rect x="29.75" y="121.55" width="8.70" height="23.31" fill="#72bf44"/><rect x="29.75" y="121.55" width="8.70" height="11.10" fill="#ffb347"/><rect x="29.75" y="121.55" width="8.70" height="6.30" fill="#00e0e0"/><rect x="59.50" y="121.55" width="28.75" height="23.31" fill="#000"/><rect x="59.50" y="121.55" width="7.90" height="23.31" fill="#72bf44"/><rect x="59.50" y="121.55" width="7.90" height="10.50" fill="#ffb347"/><rect x="59.50" y="121.55" width="7.90" height="5.50" fill="#00e0e0"/><rect x="89.25" y="121.55" width="28.75" height="23.31" fill="#000"/><rect x="89.25" y="121.55" width="3.90" height="23.31" fill="#ffb347"/><rect x="89.25" y="121.55" width="3.90" height="5.50" fill="#00e0e0"/><rect x="119.00" y="121.55" width="28.75" height="23.31" fill="#000"/><rect x="119.00" y="121.55" width="4.60" height="23.31" fill="#72bf44"/><rect x="119.00" y="121.55" width="4.60" height="19.00" fill="#ffb347"/><rect x="119.00" y="121.55" width="4.60" height="4.00" fill="#00e0e0"/><rect x="148.75" y="121.55" width="28.75" height="23.31" fill="#000"/><rect x="148.75" y="121.55" width="4.60" height="23.31" fill="#ffb347"/><rect x="148.75" y="121.55" width="4.60" height="4.50" fill="#00e0e0"/><rect x="178.50" y="121.55" width="28.75" height="23.31" fill="#000"/><rect x="208.25" y="121.55" width="28.75" height="23.31" fill="#000"/><rect x="208.25" y="121.55" width="11.00" height="23.31" fill="#ffb347"/><rect x="208.25" y="121.55" width="11.00" height="5.50" fill="#00e0e0"/><rect x="238.00" y="121.55" width="28.75" height="23.31" fill="#000"/><rect x="238.00" y="121.55" width="13.90" height="23.31" fill="#72bf44"/><rect x="238.00" y="121.55" width="13.90" height="17.10" fill="#ffb347"/><rect x="238.00" y="121.55" width="13.90" height="3.40" fill="#00e0e0"/><rect x="267.75" y="121.55" width="28.75" height="23.31" fill="#000"/><rect x="297.50" y="121.55" width="28.75" height="23.31" fill="#000"/><rect x="327.25" y="121.55" width="28.75" height="23.31" fill="#000"/><rect x="357.00" y="121.55" width="28.75" height="23.31" fill="#000"/><rect x="0.00" y="145.86" width="28.75" height="23.31" fill="#000"/><rect x="0.00" y="145.86" width="7.90" height="23.31" fill="#72bf44"/><rect x="0.00" y="145.86" width="7.90" height="9.60" fill="#ffb347"/><rect x="0.00" y="145.86" width="7.90" height="4.60" fill="#00e0e0"/><rect x="29.75" y="145.86" width="28.75" height="23.31" fill="#000"/><rect x="29.75" y="145.86" width="5.50" height="23.31" fill="#72bf44"/><rect x="29.75" y="145.86" width="5.50" height="10.20" fill="#ffb347"/><rect x="29.75" y="145.86" width="5.50" height="6.00" fill="#00e0e0"/><rect x="59.50" y="145.86" width="28.75" height="23.31" fill="#000"/><rect x="89.25" y="145.86" width="28.75" height="23.31" fill="#000"/><rect x="119.00" y="145.86" width="28.75" height="23.31" fill="#000"/><rect x="119.00" y="145.86" width="5.60" height="23.31" fill="#72bf44"/><rect x="119.00" y="145.86" width="5.60" height="20.20" fill="#ffb347"/><rect x="119.00" y="145.86" width="5.60" height="4.20" fill="#00e0e0"/><rect x="148.75" y="145.86" width="28.75" height="23.31" fill="#000"/><rect x="148.75" y="145.86" width="10.80" height="23.31" fill="#72bf44"/><rect x="148.75" y="145.86" width="10.80" height="19.10" fill="#ffb347"/><rect x="148.75" y="145.86" width="10.80" height="4.20" fill="#00e0e0"/><rect x="178.50" y="145.86" width="28.75" height="23.31" fill="#000"/><rect x="178.50" y="145.86" width="5.30" height="23.31" fill="#ffb347"/><rect x="178.50" y="145.86" width="5.30" height="6.00" fill="#00e0e0"/><rect x="208.25" y="145.86" width="28.75" height="23.31" fill="#000"/><rect x="208.25" y="145.86" width="9.80" height="23.31" fill="#ffb347"/><rect x="208.25" y="145.86" width="9.80" height="5.80" fill="#00e0e0"/><rect x="238.00" y="145.86" width="28.75" height="23.31" fill="#000"/><rect x="238.00" y="145.86" width="17.80" height="23.31" fill="#72bf44"/><rect x="238.00" y="145.86" width="17.80" height="13.50" fill="#ffb347"/><rect x="238.00" y="145.86" width="17.80" height="2.80" fill="#00e0e0"/><rect x="267.75" y="145.86" width="28.75" height="23.31" fill="#000"/><rect x="267.75" y="145.86" width="12.30" height="23.31" fill="#72bf44"/><rect x="267.75" y="145.86" width="12.30" height="15.10" fill="#ffb347"/><rect x="267.75" y="145.86" width="12.30" height="2.80" fill="#00e0e0"/><rect x="297.50" y="145.86" width="28.75" height="23.31" fill="#000"/><rect x="327.25" y="145.86" width="28.75" height="23.31" fill="#000"/><rect x="357.00" y="145.86" width="28.75" height="23.31" fill="#000"/><rect x="0.00" y="170.17" width="28.75" height="23.31" fill="#000"/><rect x="0.00" y="170.17" width="5.80" height="23.31" fill="#ffb347"/><rect x="0.00" y="170.17" width="5.80" height="5.80" fill="#00e0e0"/><rect x="29.75" y="170.17" width="28.75" height="23.31" fill="#000"/><rect x="29.75" y="170.17" width="1.00" height="23.31" fill="#ffb347"/><rect x="29.75" y="170.17" width="1.00" height="5.80" fill="#00e0e0"/><rect x="59.50" y="170.17" width="28.75" height="23.31" fill="#000"/><rect x="89.25" y="170.17" width="28.75" height="23.31" fill="#000"/><rect x="119.00" y="170.17" width="28.75" height="23.31" fill="#000"/><rect x="148.75" y="170.17" width="28.75" height="23.31" fill="#000"/><rect x="178.50" y="170.17" width="28.75" height="23.31" fill="#000"/><rect x="208.25" y="170.17" width="28.75" height="23.31" fill="#000"/><rect x="238.00" y="170.17" width="28.75" height="23.31" fill="#000"/><rect x="238.00" y="170.17" width="20.90" height="23.31" fill="#ffb347"/><rect x="238.00" y="170.17" width="20.90" height="5.80" fill="#00e0e0"/><rect x="267.75" y="170.17" width="28.75" height="23.31" fill="#000"/><rect x="267.75" y="170.17" width="1.20" height="23.31" fill="#ffb347"/><rect x="267.75" y="170.17" width="1.20" height="5.80" fill="#00e0e0"/><rect x="297.50" y="170.17" width="28.75" height="23.31" fill="#000"/><rect x="327.25" y="170.17" width="28.75" height="23.31" fill="#000"/><rect x="357.00" y="170.17" width="28.75" height="23.31" fill="#000"/><rect x="0.00" y="194.48" width="28.75" height="23.31" fill="#000"/><rect x="0.00" y="194.48" width="13.90" height="23.31" fill="#72bf44"/><rect x="0.00" y="194.48" width="13.90" height="6.30" fill="#ffb347"/><rect x="29.75" y="194.48" width="28.75" height="23.31" fill="#000"/><rect x="59.50" y="194.48" width="28.75" height="23.31" fill="#000"/><rect x="89.25" y="194.48" width="28.75" height="23.31" fill="#000"/><rect x="119.00" y="194.48" width="28.75" height="23.31" fill="#000"/><rect x="148.75" y="194.48" width="28.75" height="23.31" fill="#000"/><rect x="178.50" y="194.48" width="28.75" height="23.31" fill="#000"/><rect x="208.25" y="194.48" width="28.75" height="23.31" fill="#000"/><rect x="238.00" y="194.48" width="28.75" height="23.31" fill="#000"/><rect x="267.75" y="194.48" width="28.75" height="23.31" fill="#000"/><rect x="267.75" y="194.48" width="12.90" height="23.31" fill="#72bf44"/><rect x="267.75" y="194.48" width="12.90" height="8.60" fill="#ffb347"/><rect x="267.75" y="194.48" width="12.90" height="1.20" fill="#00e0e0"/><rect x="297.50" y="194.48" width="28.75" height="23.31" fill="#000"/><rect x="297.50" y="194.48" width="10.20" height="23.31" fill="#72bf44"/><rect x="297.50" y="194.48" width="10.20" height="10.50" fill="#ffb347"/><rect x="297.50" y="194.48" width="10.20" height="1.20" fill="#00e0e0"/><rect x="327.25" y="194.48" width="28.75" height="23.31" fill="#000"/><rect x="357.00" y="194.48" width="28.75" height="23.31" fill="#000"/><rect x="0.00" y="218.79" width="28.75" height="23.31" fill="#000"/><rect x="0.00" y="218.79" width="5.00" height="23.31" fill="#72bf44"/><rect x="0.00" y="218.79" width="5.00" height="5.80" fill="#ffb347"/><rect x="29.75" y="218.79" width="28.75" height="23.31" fill="#000"/><rect x="59.50" y="218.79" width="28.75" height="23.31" fill="#000"/><rect x="89.25" y="218.79" width="28.75" height="23.31" fill="#000"/><rect x="119.00" y="218.79" width="28.75" height="23.31" fill="#000"/><rect x="148.75" y="218.79" width="28.75" height="23.31" fill="#000"/><rect x="178.50" y="218.79" width="28.75" height="23.31" fill="#000"/><rect x="208.25" y="218.79" width="28.75" height="23.31" fill="#000"/><rect x="238.00" y="218.79" width="28.75" height="23.31" fill="#000"/><rect x="267.75" y="218.79" width="28.75" height="23.31" fill="#000"/><rect x="267.75" y="218.79" width="1.00" height="23.31" fill="#72bf44"/><rect x="267.75" y="218.79" width="1.00" height="16.00" fill="#ffb347"/><rect x="297.50" y="218.79" width="28.75" height="23.31" fill="#000"/><rect x="297.50" y="218.79" width="2.20" height="23.31" fill="#72bf44"/><rect x="297.50" y="218.79" width="2.20" height="8.40" fill="#ffb347"/><rect x="297.50" y="218.79" width="2.20" height="1.00" fill="#00e0e0"/><rect x="327.25" y="218.79" width="28.75" height="23.31" fill="#000"/><rect x="357.00" y="218.79" width="28.75" height="23.31" fill="#000"/><rect x="0.00" y="243.10" width="28.75" height="23.31" fill="#000"/><rect x="0.00" y="243.10" width="4.40" height="23.31" fill="#72bf44"/><rect x="0.00" y="243.10" width="4.40" height="7.00" fill="#ffb347"/><rect x="29.75" y="243.10" width="28.75" height="23.31" fill="#000"/><rect x="59.50" y="243.10" width="28.75" height="23.31" fill="#000"/><rect x="89.25" y="243.10" width="28.75" height="23.31" fill="#000"/><rect x="119.00" y="243.10" width="28.75" height="23.31" fill="#000"/><rect x="148.75" y="243.10" width="28.75" height="23.31" fill="#000"/><rect x="178.50" y="243.10" width="28.75" height="23.31" fill="#000"/><rect x="208.25" y="243.10" width="28.75" height="23.31" fill="#000"/><rect x="238.00" y="243.10" width="28.75" height="23.31" fill="#000"/><rect x="267.75" y="243.10" width="28.75" height="23.31" fill="#000"/><rect x="297.50" y="243.10" width="28.75" height="23.31" fill="#000"/><rect x="297.50" y="243.10" width="4.30" height="23.31" fill="#72bf44"/><rect x="297.50" y="243.10" width="4.30" height="17.50" fill="#ffb347"/><rect x="297.50" y="243.10" width="4.30" height="3.30" fill="#00e0e0"/><rect x="327.25" y="243.10" width="28.75" height="23.31" fill="#000"/><rect x="357.00" y="243.10" width="28.75" height="23.31" fill="#000"/><rect x="0.00" y="267.41" width="28.75" height="23.31" fill="#000"/><rect x="0.00" y="267.41" width="4.80" height="23.31" fill="#72bf44"/><rect x="29.75" y="267.41" width="28.75" height="23.31" fill="#000"/><rect x="59.50" y="267.41" width="28.75" height="23.31" fill="#000"/><rect x="89.25" y="267.41" width="28.75" height="23.31" fill="#000"/><rect x="119.00" y="267.41" width="28.75" height="23.31" fill="#000"/><rect x="148.75" y="267.41" width="28.75" height="23.31" fill="#000"/><rect x="178.50" y="267.41" width="28.75" height="23.31" fill="#000"/><rect x="208.25" y="267.41" width="28.75" height="23.31" fill="#000"/><rect x="238.00" y="267.41" width="28.75" height="23.31" fill="#000"/><rect x="267.75" y="267.41" width="28.75" height="23.31" fill="#000"/><rect x="297.50" y="267.41" width="28.75" height="23.31" fill="#000"/><rect x="327.25" y="267.41" width="28.75" height="23.31" fill="#000"/><rect x="327.25" y="267.41" width="15.70" height="23.31" fill="#72bf44"/><rect x="357.00" y="267.41" width="28.75" height="23.31" fill="#000"/><rect x="0.00" y="291.72" width="28.75" height="23.31" fill="#000"/><rect x="29.75" y="291.72" width="28.75" height="23.31" fill="#000"/><rect x="59.50" y="291.72" width="28.75" height="23.31" fill="#000"/><rect x="89.25" y="291.72" width="28.75" height="23.31" fill="#000"/><rect x="119.00" y="291.72" width="28.75" height="23.31" fill="#000"/><rect x="148.75" y="291.72" width="28.75" height="23.31" fill="#000"/><rect x="178.50" y="291.72" width="28.75" height="23.31" fill="#000"/><rect x="208.25" y="291.72" width="28.75" height="23.31" fill="#000"/><rect x="238.00" y="291.72" width="28.75" height="23.31" fill="#000"/><rect x="267.75" y="291.72" width="28.75" height="23.31" fill="#000"/><rect x="297.50" y="291.72" width="28.75" height="23.31" fill="#000"/><rect x="327.25" y="291.72" width="28.75" height="23.31" fill="#000"/><rect x="357.00" y="291.72" width="28.75" height="23.31" fill="#000"/><rect x="357.00" y="291.72" width="20.90" height="23.31" fill="#72bf44"/></svg><div class="t" style="left:591.00px;top:264.10px;width:28.75px;text-align:center;color:#f2f2f2;font-size:12px;">AA</div><div class="t" style="left:620.75px;top:264.10px;width:28.75px;text-align:center;color:#f2f2f2;font-size:12px;">AKs</div><div class="t" style="left:650.50px;top:264.10px;width:28.75px;text-align:center;color:#f2f2f2;font-size:12px;">AQs</div><div class="t" style="left:680.25px;top:264.10px;width:28.75px;text-align:center;color:#f2f2f2;font-size:12px;">AJs</div><div class="t" style="left:710.00px;top:264.10px;width:28.75px;text-align:center;color:#f2f2f2;font-size:12px;">ATs</div><div class="t" style="left:739.75px;top:264.10px;width:28.75px;text-align:center;color:#f2f2f2;font-size:12px;">A9s</div><div class="t" style="left:769.50px;top:264.10px;width:28.75px;text-align:center;color:#f2f2f2;font-size:12px;">A8s</div><div class="t" style="left:799.25px;top:264.10px;width:28.75px;text-align:center;color:#f2f2f2;font-size:12px;">A7s</div><div class="t" style="left:829.00px;top:264.10px;width:28.75px;text-align:center;color:#f2f2f2;font-size:12px;">A6s</div><div class="t" style="left:858.75px;top:264.10px;width:28.75px;text-align:center;color:#f2f2f2;font-size:12px;">A5s</div><div class="t" style="left:888.50px;top:264.10px;width:28.75px;text-align:center;color:#f2f2f2;font-size:12px;">A4s</div><div class="t" style="left:918.25px;top:264.10px;width:28.75px;text-align:center;color:#f2f2f2;font-size:12px;">A3s</div><div class="t" style="left:948.00px;top:264.10px;width:28.75px;text-align:center;color:#f2f2f2;font-size:12px;">A2s</div><div class="t" style="left:591.00px;top:288.41px;width:28.75px;text-align:center;color:#f2f2f2;font-size:12px;">AKo</div><div class="t" style="left:620.75px;top:288.41px;width:28.75px;text-align:center;color:#f2f2f2;font-size:12px;">KK</div><div class="t" style="left:650.50px;top:288.41px;width:28.75px;text-align:center;color:#f2f2f2;font-size:12px;">KQs</div><div class="t" style="left:680.25px;top:288.41px;width:28.75px;text-align:center;color:#f2f2f2;font-size:12px;">KJs</div><div class="t" style="left:710.00px;top:288.41px;width:28.75px;text-align:center;color:#f2f2f2;font-size:12px;">KTs</div><div class="t" style="left:739.75px;top:288.41px;width:28.75px;text-align:center;color:#f2f2f2;font-size:12px;">K9s</div><div class="t" style="left:769.50px;top:288.41px;width:28.75px;text-align:center;color:#f2f2f2;font-size:12px;">K8s</div><div class="t" style="left:799.25px;top:288.41px;width:28.75px;text-align:center;color:#f2f2f2;font-size:12px;">K7s</div><div class="t" style="left:829.00px;top:288.41px;width:28.75px;text-align:center;color:#f2f2f2;font-size:12px;">K6s</div><div class="t" style="left:858.75px;top:288.41px;width:28.75px;text-align:center;color:#f2f2f2;font-size:12px;">K5s</div><div class="t" style="left:888.50px;top:288.41px;width:28.75px;text-align:center;color:#f2f2f2;font-size:12px;">K4s</div><div class="t" style="left:918.25px;top:288.41px;width:28.75px;text-align:center;color:#f2f2f2;font-size:12px;">K3s</div><div class="t" style="left:948.00px;top:288.41px;width:28.75px;text-align:center;color:#f2f2f2;font-size:12px;">K2s</div><div class="t" style="left:591.00px;top:312.72px;width:28.75px;text-align:center;color:#f2f2f2;font-size:12px;">AQo</div><div class="t" style="left:620.75px;top:312.72px;width:28.75px;text-align:center;color:#f2f2f2;font-size:12px;">KQo</div><div class="t" style="left:650.50px;top:312.72px;width:28.75px;text-align:center;color:#f2f2f2;font-size:12px;">QQ</div><div class="t" style="left:680.25px;top:312.72px;width:28.75px;text-align:center;color:#f2f2f2;font-size:12px;">QJs</div><div class="t" style="left:710.00px;top:312.72px;width:28.75px;text-align:center;color:#f2f2f2;font-size:12px;">QTs</div><div class="t" style="left:739.75px;top:312.72px;width:28.75px;text-align:center;color:#f2f2f2;font-size:12px;">Q9s</div><div class="t" style="left:769.50px;top:312.72px;width:28.75px;text-align:center;color:#f2f2f2;font-size:12px;">Q8s</div><div class="t" style="left:799.25px;top:312.72px;width:28.75px;text-align:center;color:#f2f2f2;font-size:12px;">Q7s</div><div class="t" style="left:829.00px;top:312.72px;width:28.75px;text-align:center;color:#f2f2f2;font-size:12px;">Q6s</div><div class="t" style="left:858.75px;top:312.72px;width:28.75px;text-align:center;color:#f2f2f2;font-size:12px;">Q5s</div><div class="t" style="left:888.50px;top:312.72px;width:28.75px;text-align:center;color:#f2f2f2;font-size:12px;">Q4s</div><div class="t" style="left:918.25px;top:312.72px;width:28.75px;text-align:center;color:#f2f2f2;font-size:12px;">Q3s</div><div class="t" style="left:948.00px;top:312.72px;width:28.75px;text-align:center;color:#f2f2f2;font-size:12px;">Q2s</div><div class="t" style="left:591.00px;top:337.03px;width:28.75px;text-align:center;color:#f2f2f2;font-size:12px;">AJo</div><div class="t" style="left:620.75px;top:337.03px;width:28.75px;text-align:center;color:#f2f2f2;font-size:12px;">KJo</div><div class="t" style="left:650.50px;top:337.03px;width:28.75px;text-align:center;color:#f2f2f2;font-size:12px;">QJo</div><div class="t" style="left:680.25px;top:337.03px;width:28.75px;text-align:center;color:#f2f2f2;font-size:12px;">JJ</div><div class="t" style="left:710.00px;top:337.03px;width:28.75px;text-align:center;color:#f2f2f2;font-size:12px;">JTs</div><div class="t" style="left:739.75px;top:337.03px;width:28.75px;text-align:center;color:#f2f2f2;font-size:12px;">J9s</div><div class="t" style="left:769.50px;top:337.03px;width:28.75px;text-align:center;color:#f2f2f2;font-size:12px;">J8s</div><div class="t" style="left:799.25px;top:337.03px;width:28.75px;text-align:center;color:#f2f2f2;font-size:12px;">J7s</div><div class="t" style="left:829.00px;top:337.03px;width:28.75px;text-align:center;color:#f2f2f2;font-size:12px;">J6s</div><div class="t" style="left:858.75px;top:337.03px;width:28.75px;text-align:center;color:#f2f2f2;font-size:12px;">J5s</div><div class="t" style="left:888.50px;top:337.03px;width:28.75px;text-align:center;color:#f2f2f2;font-size:12px;">J4s</div><div class="t" style="left:918.25px;top:337.03px;width:28.75px;text-align:center;color:#f2f2f2;font-size:12px;">J3s</div><div class="t" style="left:948.00px;top:337.03px;width:28.75px;text-align:center;color:#f2f2f2;font-size:12px;">J2s</div><div class="t" style="left:591.00px;top:361.34px;width:28.75px;text-align:center;color:#f2f2f2;font-size:12px;">ATo</div><div class="t" style="left:620.75px;top:361.34px;width:28.75px;text-align:center;color:#f2f2f2;font-size:12px;">KTo</div><div class="t" style="left:650.50px;top:361.34px;width:28.75px;text-align:center;color:#f2f2f2;font-size:12px;">QTo</div><div class="t" style="left:680.25px;top:361.34px;width:28.75px;text-align:center;color:#f2f2f2;font-size:12px;">JTo</div><div class="t" style="left:710.00px;top:361.34px;width:28.75px;text-align:center;color:#f2f2f2;font-size:12px;">TT</div><div class="t" style="left:739.75px;top:361.34px;width:28.75px;text-align:center;color:#f2f2f2;font-size:12px;">T9s</div><div class="t" style="left:769.50px;top:361.34px;width:28.75px;text-align:center;color:#f2f2f2;font-size:12px;">T8s</div><div class="t" style="left:799.25px;top:361.34px;width:28.75px;text-align:center;color:#f2f2f2;font-size:12px;">T7s</div><div class="t" style="left:829.00px;top:361.34px;width:28.75px;text-align:center;color:#f2f2f2;font-size:12px;">T6s</div><div class="t" style="left:858.75px;top:361.34px;width:28.75px;text-align:center;color:#f2f2f2;font-size:12px;">T5s</div><div class="t" style="left:888.50px;top:361.34px;width:28.75px;text-align:center;color:#f2f2f2;font-size:12px;">T4s</div><div class="t" style="left:918.25px;top:361.34px;width:28.75px;text-align:center;color:#f2f2f2;font-size:12px;">T3s</div><div class="t" style="left:948.00px;top:361.34px;width:28.75px;text-align:center;color:#f2f2f2;font-size:12px;">T2s</div><div class="t" style="left:591.00px;top:385.65px;width:28.75px;text-align:center;color:#f2f2f2;font-size:12px;">A9o</div><div class="t" style="left:620.75px;top:385.65px;width:28.75px;text-align:center;color:#f2f2f2;font-size:12px;">K9o</div><div class="t" style="left:650.50px;top:385.65px;width:28.75px;text-align:center;color:#f2f2f2;font-size:12px;">Q9o</div><div class="t" style="left:680.25px;top:385.65px;width:28.75px;text-align:center;color:#f2f2f2;font-size:12px;">J9o</div><div class="t" style="left:710.00px;top:385.65px;width:28.75px;text-align:center;color:#f2f2f2;font-size:12px;">T9o</div><div class="t" style="left:739.75px;top:385.65px;width:28.75px;text-align:center;color:#f2f2f2;font-size:12px;">99</div><div class="t" style="left:769.50px;top:385.65px;width:28.75px;text-align:center;color:#f2f2f2;font-size:12px;">98s</div><div class="t" style="left:799.25px;top:385.65px;width:28.75px;text-align:center;color:#f2f2f2;font-size:12px;">97s</div><div class="t" style="left:829.00px;top:385.65px;width:28.75px;text-align:center;color:#f2f2f2;font-size:12px;">96s</div><div class="t" style="left:858.75px;top:385.65px;width:28.75px;text-align:center;color:#f2f2f2;font-size:12px;">95s</div><div class="t" style="left:888.50px;top:385.65px;width:28.75px;text-align:center;color:#f2f2f2;font-size:12px;">94s</div><div class="t" style="left:918.25px;top:385.65px;width:28.75px;text-align:center;color:#f2f2f2;font-size:12px;">93s</div><div class="t" style="left:948.00px;top:385.65px;width:28.75px;text-align:center;color:#f2f2f2;font-size:12px;">92s</div><div class="t" style="left:591.00px;top:409.96px;width:28.75px;text-align:center;color:#f2f2f2;font-size:12px;">A8o</div><div class="t" style="left:620.75px;top:409.96px;width:28.75px;text-align:center;color:#f2f2f2;font-size:12px;">K8o</div><div class="t" style="left:650.50px;top:409.96px;width:28.75px;text-align:center;color:#f2f2f2;font-size:12px;">Q8o</div><div class="t" style="left:680.25px;top:409.96px;width:28.75px;text-align:center;color:#f2f2f2;font-size:12px;">J8o</div><div class="t" style="left:710.00px;top:409.96px;width:28.75px;text-align:center;color:#f2f2f2;font-size:12px;">T8o</div><div class="t" style="left:739.75px;top:409.96px;width:28.75px;text-align:center;color:#f2f2f2;font-size:12px;">98o</div><div class="t" style="left:769.50px;top:409.96px;width:28.75px;text-align:center;color:#f2f2f2;font-size:12px;">88</div><div class="t" style="left:799.25px;top:409.96px;width:28.75px;text-align:center;color:#f2f2f2;font-size:12px;">87s</div><div class="t" style="left:829.00px;top:409.96px;width:28.75px;text-align:center;color:#f2f2f2;font-size:12px;">86s</div><div class="t" style="left:858.75px;top:409.96px;width:28.75px;text-align:center;color:#f2f2f2;font-size:12px;">85s</div><div class="t" style="left:888.50px;top:409.96px;width:28.75px;text-align:center;color:#f2f2f2;font-size:12px;">84s</div><div class="t" style="left:918.25px;top:409.96px;width:28.75px;text-align:center;color:#f2f2f2;font-size:12px;">83s</div><div class="t" style="left:948.00px;top:409.96px;width:28.75px;text-align:center;color:#f2f2f2;font-size:12px;">82s</div><div class="t" style="left:591.00px;top:434.27px;width:28.75px;text-align:center;color:#f2f2f2;font-size:12px;">A7o</div><div class="t" style="left:620.75px;top:434.27px;width:28.75px;text-align:center;color:#f2f2f2;font-size:12px;">K7o</div><div class="t" style="left:650.50px;top:434.27px;width:28.75px;text-align:center;color:#f2f2f2;font-size:12px;">Q7o</div><div class="t" style="left:680.25px;top:434.27px;width:28.75px;text-align:center;color:#f2f2f2;font-size:12px;">J7o</div><div class="t" style="left:710.00px;top:434.27px;width:28.75px;text-align:center;color:#f2f2f2;font-size:12px;">T7o</div><div class="t" style="left:739.75px;top:434.27px;width:28.75px;text-align:center;color:#f2f2f2;font-size:12px;">97o</div><div class="t" style="left:769.50px;top:434.27px;width:28.75px;text-align:center;color:#f2f2f2;font-size:12px;">87o</div><div class="t" style="left:799.25px;top:434.27px;width:28.75px;text-align:center;color:#f2f2f2;font-size:12px;">77</div><div class="t" style="left:829.00px;top:434.27px;width:28.75px;text-align:center;color:#f2f2f2;font-size:12px;">76s</div><div class="t" style="left:858.75px;top:434.27px;width:28.75px;text-align:center;color:#f2f2f2;font-size:12px;">75s</div><div class="t" style="left:888.50px;top:434.27px;width:28.75px;text-align:center;color:#f2f2f2;font-size:12px;">74s</div><div class="t" style="left:918.25px;top:434.27px;width:28.75px;text-align:center;color:#f2f2f2;font-size:12px;">73s</div><div class="t" style="left:948.00px;top:434.27px;width:28.75px;text-align:center;color:#f2f2f2;font-size:12px;">72s</div><div class="t" style="left:591.00px;top:458.58px;width:28.75px;text-align:center;color:#f2f2f2;font-size:12px;">A6o</div><div class="t" style="left:620.75px;top:458.58px;width:28.75px;text-align:center;color:#f2f2f2;font-size:12px;">K6o</div><div class="t" style="left:650.50px;top:458.58px;width:28.75px;text-align:center;color:#f2f2f2;font-size:12px;">Q6o</div><div class="t" style="left:680.25px;top:458.58px;width:28.75px;text-align:center;color:#f2f2f2;font-size:12px;">J6o</div><div class="t" style="left:710.00px;top:458.58px;width:28.75px;text-align:center;color:#f2f2f2;font-size:12px;">T6o</div><div class="t" style="left:739.75px;top:458.58px;width:28.75px;text-align:center;color:#f2f2f2;font-size:12px;">96o</div><div class="t" style="left:769.50px;top:458.58px;width:28.75px;text-align:center;color:#f2f2f2;font-size:12px;">86o</div><div class="t" style="left:799.25px;top:458.58px;width:28.75px;text-align:center;color:#f2f2f2;font-size:12px;">76o</div><div class="t" style="left:829.00px;top:458.58px;width:28.75px;text-align:center;color:#f2f2f2;font-size:12px;">66</div><div class="t" style="left:858.75px;top:458.58px;width:28.75px;text-align:center;color:#f2f2f2;font-size:12px;">65s</div><div class="t" style="left:888.50px;top:458.58px;width:28.75px;text-align:center;color:#f2f2f2;font-size:12px;">64s</div><div class="t" style="left:918.25px;top:458.58px;width:28.75px;text-align:center;color:#f2f2f2;font-size:12px;">63s</div><div class="t" style="left:948.00px;top:458.58px;width:28.75px;text-align:center;color:#f2f2f2;font-size:12px;">62s</div><div class="t" style="left:591.00px;top:482.89px;width:28.75px;text-align:center;color:#f2f2f2;font-size:12px;">A5o</div><div class="t" style="left:620.75px;top:482.89px;width:28.75px;text-align:center;color:#f2f2f2;font-size:12px;">K5o</div><div class="t" style="left:650.50px;top:482.89px;width:28.75px;text-align:center;color:#f2f2f2;font-size:12px;">Q5o</div><div class="t" style="left:680.25px;top:482.89px;width:28.75px;text-align:center;color:#f2f2f2;font-size:12px;">J5o</div><div class="t" style="left:710.00px;top:482.89px;width:28.75px;text-align:center;color:#f2f2f2;font-size:12px;">T5o</div><div class="t" style="left:739.75px;top:482.89px;width:28.75px;text-align:center;color:#f2f2f2;font-size:12px;">95o</div><div class="t" style="left:769.50px;top:482.89px;width:28.75px;text-align:center;color:#f2f2f2;font-size:12px;">85o</div><div class="t" style="left:799.25px;top:482.89px;width:28.75px;text-align:center;color:#f2f2f2;font-size:12px;">75o</div><div class="t" style="left:829.00px;top:482.89px;width:28.75px;text-align:center;color:#f2f2f2;font-size:12px;">65o</div><div class="t" style="left:858.75px;top:482.89px;width:28.75px;text-align:center;color:#f2f2f2;font-size:12px;">55</div><div class="t" style="left:888.50px;top:482.89px;width:28.75px;text-align:center;color:#f2f2f2;font-size:12px;">54s</div><div class="t" style="left:918.25px;top:482.89px;width:28.75px;text-align:center;color:#f2f2f2;font-size:12px;">53s</div><div class="t" style="left:948.00px;top:482.89px;width:28.75px;text-align:center;color:#f2f2f2;font-size:12px;">52s</div><div class="t" style="left:591.00px;top:507.20px;width:28.75px;text-align:center;color:#f2f2f2;font-size:12px;">A4o</div><div class="t" style="left:620.75px;top:507.20px;width:28.75px;text-align:center;color:#f2f2f2;font-size:12px;">K4o</div><div class="t" style="left:650.50px;top:507.20px;width:28.75px;text-align:center;color:#f2f2f2;font-size:12px;">Q4o</div><div class="t" style="left:680.25px;top:507.20px;width:28.75px;text-align:center;color:#f2f2f2;font-size:12px;">J4o</div><div class="t" style="left:710.00px;top:507.20px;width:28.75px;text-align:center;color:#f2f2f2;font-size:12px;">T4o</div><div class="t" style="left:739.75px;top:507.20px;width:28.75px;text-align:center;color:#f2f2f2;font-size:12px;">94o</div><div class="t" style="left:769.50px;top:507.20px;width:28.75px;text-align:center;color:#f2f2f2;font-size:12px;">84o</div><div class="t" style="left:799.25px;top:507.20px;width:28.75px;text-align:center;color:#f2f2f2;font-size:12px;">74o</div><div class="t" style="left:829.00px;top:507.20px;width:28.75px;text-align:center;color:#f2f2f2;font-size:12px;">64o</div><div class="t" style="left:858.75px;top:507.20px;width:28.75px;text-align:center;color:#f2f2f2;font-size:12px;">54o</div><div class="t" style="left:888.50px;top:507.20px;width:28.75px;text-align:center;color:#f2f2f2;font-size:12px;">44</div><div class="t" style="left:918.25px;top:507.20px;width:28.75px;text-align:center;color:#f2f2f2;font-size:12px;">43s</div><div class="t" style="left:948.00px;top:507.20px;width:28.75px;text-align:center;color:#f2f2f2;font-size:12px;">42s</div><div class="t" style="left:591.00px;top:531.51px;width:28.75px;text-align:center;color:#f2f2f2;font-size:12px;">A3o</div><div class="t" style="left:620.75px;top:531.51px;width:28.75px;text-align:center;color:#f2f2f2;font-size:12px;">K3o</div><div class="t" style="left:650.50px;top:531.51px;width:28.75px;text-align:center;color:#f2f2f2;font-size:12px;">Q3o</div><div class="t" style="left:680.25px;top:531.51px;width:28.75px;text-align:center;color:#f2f2f2;font-size:12px;">J3o</div><div class="t" style="left:710.00px;top:531.51px;width:28.75px;text-align:center;color:#f2f2f2;font-size:12px;">T3o</div><div class="t" style="left:739.75px;top:531.51px;width:28.75px;text-align:center;color:#f2f2f2;font-size:12px;">93o</div><div class="t" style="left:769.50px;top:531.51px;width:28.75px;text-align:center;color:#f2f2f2;font-size:12px;">83o</div><div class="t" style="left:799.25px;top:531.51px;width:28.75px;text-align:center;color:#f2f2f2;font-size:12px;">73o</div><div class="t" style="left:829.00px;top:531.51px;width:28.75px;text-align:center;color:#f2f2f2;font-size:12px;">63o</div><div class="t" style="left:858.75px;top:531.51px;width:28.75px;text-align:center;color:#f2f2f2;font-size:12px;">53o</div><div class="t" style="left:888.50px;top:531.51px;width:28.75px;text-align:center;color:#f2f2f2;font-size:12px;">43o</div><div class="t" style="left:918.25px;top:531.51px;width:28.75px;text-align:center;color:#f2f2f2;font-size:12px;">33</div><div class="t" style="left:948.00px;top:531.51px;width:28.75px;text-align:center;color:#f2f2f2;font-size:12px;">32s</div><div class="t" style="left:591.00px;top:555.82px;width:28.75px;text-align:center;color:#f2f2f2;font-size:12px;">A2o</div><div class="t" style="left:620.75px;top:555.82px;width:28.75px;text-align:center;color:#f2f2f2;font-size:12px;">K2o</div><div class="t" style="left:650.50px;top:555.82px;width:28.75px;text-align:center;color:#f2f2f2;font-size:12px;">Q2o</div><div class="t" style="left:680.25px;top:555.82px;width:28.75px;text-align:center;color:#f2f2f2;font-size:12px;">J2o</div><div class="t" style="left:710.00px;top:555.82px;width:28.75px;text-align:center;color:#f2f2f2;font-size:12px;">T2o</div><div class="t" style="left:739.75px;top:555.82px;width:28.75px;text-align:center;color:#f2f2f2;font-size:12px;">92o</div><div class="t" style="left:769.50px;top:555.82px;width:28.75px;text-align:center;color:#f2f2f2;font-size:12px;">82o</div><div class="t" style="left:799.25px;top:555.82px;width:28.75px;text-align:center;color:#f2f2f2;font-size:12px;">72o</div><div class="t" style="left:829.00px;top:555.82px;width:28.75px;text-align:center;color:#f2f2f2;font-size:12px;">62o</div><div class="t" style="left:858.75px;top:555.82px;width:28.75px;text-align:center;color:#f2f2f2;font-size:12px;">52o</div><div class="t" style="left:888.50px;top:555.82px;width:28.75px;text-align:center;color:#f2f2f2;font-size:12px;">42o</div><div class="t" style="left:918.25px;top:555.82px;width:28.75px;text-align:center;color:#f2f2f2;font-size:12px;">32o</div><div class="t" style="left:948.00px;top:555.82px;width:28.75px;text-align:center;color:#f2f2f2;font-size:12px;">22</div><div style="position:absolute;left:591px;top:243.3px;width:29.9px;height:15.1px;border-radius:7.55px;background:#7aa6c2;"></div><div style="position:absolute;left:599.0px;top:244.35000000000002px;width:13px;height:13px;border-radius:50%;background:#fff;"></div><div class="t" style="left:624.8px;top:244.5px;">Display method 2</div><div style="position:absolute;left:769px;top:243.3px;width:29.6px;height:15.1px;border-radius:7.55px;background:#7aa3be;"></div><div style="position:absolute;left:784.7px;top:244.35000000000002px;width:13px;height:13px;border-radius:50%;background:#fff;"></div><div class="t" style="left:802.8px;top:244.5px;">Normalize (F8)</div><svg style="position:absolute;left:0;top:575px" width="1000" height="45" viewBox="0 575 1000 45" shape-rendering="crispEdges"><rect x="591.00" y="582.70" width="58.70" height="24.30" fill="#ffb347"/><rect x="591.00" y="582.70" width="58.70" height="5.30" fill="#00e0e0"/><rect x="649.70" y="582.70" width="132.00" height="24.30" fill="#72bf44"/><rect x="649.70" y="586.00" width="132.00" height="15.00" fill="#ffb347"/><rect x="649.70" y="582.70" width="132.00" height="3.30" fill="#00e0e0"/><rect x="781.70" y="582.70" width="18.30" height="24.30" fill="#72bf44"/><rect x="800.00" y="582.70" width="177.00" height="24.30" fill="#72bf44"/><rect x="800.00" y="582.70" width="177.00" height="6.30" fill="#ffb347"/><rect x="838.20" y="582.70" width="2.80" height="24.30" fill="#00e0e0"/><rect x="856.60" y="582.70" width="2.00" height="24.30" fill="#00e0e0"/><rect x="913.80" y="582.70" width="2.00" height="24.30" fill="#00e0e0"/><rect x="921.60" y="582.70" width="1.20" height="24.30" fill="#00e0e0"/><rect x="931.60" y="582.70" width="2.00" height="24.30" fill="#00e0e0"/><rect x="936.60" y="582.70" width="1.20" height="24.30" fill="#00e0e0"/><rect x="942.60" y="582.70" width="1.60" height="24.30" fill="#00e0e0"/><rect x="884.50" y="582.70" width="2.00" height="6.30" fill="#72bf44"/><rect x="955.50" y="582.70" width="2.00" height="6.30" fill="#72bf44"/><defs><linearGradient id="eg" x1="0" x2="1"><stop offset="0" stop-color="#66ff00"/><stop offset="1" stop-color="#ccff00"/></linearGradient></defs><rect x="591.00" y="608.00" width="58.70" height="7.80" fill="#33ff00"/><rect x="649.70" y="608.00" width="132.00" height="7.80" fill="#66ff00"/><rect x="781.70" y="608.00" width="18.30" height="7.80" fill="url(#eg)"/><rect x="800.00" y="608.00" width="177.00" height="7.80" fill="#ff0000"/></svg><div style="position:absolute;left:671.7px;top:644.2px;width:74.2px;height:26.6px;background:#0a7ccc;border-radius:2px;color:#f4f4f4;text-align:center;line-height:28.200000000000003px;font-size:12px;white-space:nowrap;">Bet 88.9</div><div style="position:absolute;left:747px;top:644.2px;width:74.2px;height:26.6px;background:#e000e0;border-radius:2px;color:#f4f4f4;text-align:center;line-height:28.200000000000003px;font-size:12px;white-space:nowrap;">Bet 28</div><div style="position:absolute;left:822px;top:644.2px;width:74.2px;height:26.6px;background:#00e0e0;border-radius:2px;color:#f4f4f4;text-align:center;line-height:28.200000000000003px;font-size:12px;white-space:nowrap;">Bet 17</div><div style="position:absolute;left:671.7px;top:672.5px;width:74.2px;height:26.6px;background:#ffb347;border-radius:2px;color:#f4f4f4;text-align:center;line-height:28.200000000000003px;font-size:12px;white-space:nowrap;">Bet 11.3</div><div style="position:absolute;left:747px;top:672.5px;width:74.2px;height:26.6px;background:#00bfff;border-radius:2px;color:#f4f4f4;text-align:center;line-height:28.200000000000003px;font-size:12px;white-space:nowrap;">Bet 5.7</div><div style="position:absolute;left:822px;top:672.5px;width:74.2px;height:26.6px;background:#72bf44;border-radius:2px;color:#f4f4f4;text-align:center;line-height:28.200000000000003px;font-size:12px;white-space:nowrap;">Check</div><div class="t" style="left:700px;top:704.5px;width:168px;text-align:center;color:#e6e6e6;">Current selection:</div><div style="position:absolute;left:747px;top:720.3px;width:73.8px;height:26.7px;background:#d2d2d2;border-radius:0px;color:#f4f4f4;text-align:center;line-height:28.3px;font-size:12px;white-space:nowrap;">Bet 88.9</div><div style="position:absolute;left:253px;top:682.5px;width:232.2px;height:27px;background:#0a82cc;border-radius:3px;color:#f4f4f4;text-align:center;line-height:28.6px;font-size:12px;white-space:nowrap;">Analysis mode (no edits)</div><div style="position:absolute;left:253px;top:713.8px;width:232.2px;height:27px;background:#c8c8c8;border-radius:3px;color:#f4f4f4;text-align:center;line-height:28.6px;font-size:12px;white-space:nowrap;">Lock + edit decision</div><div style="position:absolute;left:158.3px;top:579.2px;width:422.2px;height:94.6px;border:1.5px solid #c4c4c4;"></div><div class="t" style="left:167px;top:584.5px;">pot: 22.7</div><div class="t" style="left:167px;top:601px;">stack: 88.9</div><div class="t" style="left:167px;top:617.5px;">to call: 0</div><div class="t" style="left:167px;top:634px;">odds: NA</div><div class="t" style="left:200px;top:584.5px;width:114px;text-align:right;">Combos:</div><div class="t" style="left:318px;top:584.5px;">5.918 (<span style="color:#6a9fd0">0</span><span style="color:#e6e6e6">/</span><span style="color:#e070e0">0</span><span style="color:#e6e6e6">/</span><span style="color:#50d0d0">0.69</span><span style="color:#e6e6e6">/</span><span style="color:#f0c080">2.6</span><span style="color:#e6e6e6">/</span><span style="color:#6ab0e8">0</span><span style="color:#e6e6e6">/</span><span style="color:#a0d080">2.7</span>)</div><div class="t" style="left:200px;top:601px;width:114px;text-align:right;">Percent:</div><div class="t" style="left:318px;top:601px;"><span style="color:#6a9fd0">0</span><span style="color:#e6e6e6">/</span><span style="color:#e070e0">0</span><span style="color:#e6e6e6">/</span><span style="color:#50d0d0">11.5</span><span style="color:#e6e6e6">/</span><span style="color:#f0c080">44.1</span><span style="color:#e6e6e6">/</span><span style="color:#6ab0e8">0</span><span style="color:#e6e6e6">/</span><span style="color:#a0d080">44.4</span></div><div class="t" style="left:200px;top:617.5px;width:114px;text-align:right;">Equity:</div><div class="t" style="left:318px;top:617.5px;">45.02% (<span style="color:#6a9fd0">NA</span><span style="color:#e6e6e6">/</span><span style="color:#e070e0">13.0</span><span style="color:#e6e6e6">/</span><span style="color:#50d0d0">60</span><span style="color:#e6e6e6">/</span><span style="color:#f0c080">63</span><span style="color:#e6e6e6">/</span><span style="color:#6ab0e8">82</span><span style="color:#e6e6e6">/</span><span style="color:#a0d080">23.4</span>)</div><div class="t" style="left:200px;top:634px;width:114px;text-align:right;">EV:</div><div class="t" style="left:318px;top:634px;">10.5116 (<span style="color:#6a9fd0">NA</span><span style="color:#e6e6e6">/</span><span style="color:#e070e0">4.3</span><span style="color:#e6e6e6">/</span><span style="color:#50d0d0">14.7</span><span style="color:#e6e6e6">/</span><span style="color:#f0c080">14.8</span><span style="color:#e6e6e6">/</span><span style="color:#6ab0e8">18</span><span style="color:#e6e6e6">/</span><span style="color:#a0d080">5.2</span>)</div><div class="t" style="left:158px;top:653.5px;width:422px;text-align:center;">371 unique items in table</div><svg style="position:absolute;left:518px;top:580px" width="64" height="22" viewBox="518 580 64 22"><rect x="521.9" y="583.6" width="15.3" height="15" fill="none" stroke="#eee" stroke-width="1.4"/><path d="M526 588.5 H533 M529.5 588.5 V595.5" stroke="#ddd" stroke-width="1"/><path d="M546 583.6 H542.7 V598.6 H557.4 V595.2 M550 583.6 H557.4 V591" fill="none" stroke="#eee" stroke-width="1.4"/><path d="M549.8 592 L557 584.8" stroke="#eee" stroke-width="1.8"/><rect x="563" y="594.5" width="4" height="4.6" rx="0.6" fill="#eee"/><rect x="568.7" y="588.6" width="4.1" height="10.5" rx="0.6" fill="#eee"/><rect x="574.2" y="583.2" width="4.2" height="15.9" rx="0.6" fill="#eee"/></svg><svg style="position:absolute;left:1080px;top:255px" width="240" height="315" viewBox="1080 255 240 315" shape-rendering="crispEdges"><rect x="1082.60" y="259.40" width="16.50" height="24.00" fill="#ffb347"/><rect x="1082.60" y="259.40" width="16.50" height="5.60" fill="#00e0e0"/><rect x="1099.10" y="259.40" width="31.90" height="24.0" fill="#72bf44"/><rect x="1099.10" y="259.40" width="31.90" height="18.00" fill="#ffb347"/><rect x="1099.10" y="259.40" width="31.90" height="3.00" fill="#00e0e0"/><rect x="1131.00" y="259.40" width="6.00" height="24.0" fill="#72bf44"/><rect x="1082.60" y="287.60" width="54.40" height="24.00" fill="#ffb347"/><rect x="1082.60" y="287.60" width="54.40" height="4.40" fill="#00e0e0"/><rect x="1137.00" y="287.60" width="70.10" height="24.0" fill="#72bf44"/><rect x="1137.00" y="287.60" width="70.10" height="18.00" fill="#ffb347"/><rect x="1137.00" y="287.60" width="70.10" height="3.00" fill="#00e0e0"/><rect x="1207.10" y="287.60" width="23.00" height="24.0" fill="#72bf44"/><rect x="1082.60" y="315.80" width="8.20" height="24.00" fill="#ffb347"/><rect x="1082.60" y="315.80" width="8.20" height="4.50" fill="#00e0e0"/><rect x="1090.80" y="315.80" width="31.90" height="24.0" fill="#72bf44"/><rect x="1090.80" y="315.80" width="31.90" height="18.50" fill="#ffb347"/><rect x="1090.80" y="315.80" width="31.90" height="3.00" fill="#00e0e0"/><rect x="1082.60" y="344.00" width="43.20" height="24.00" fill="#ffb347"/><rect x="1082.60" y="344.00" width="43.20" height="5.60" fill="#00e0e0"/><rect x="1082.60" y="372.20" width="35.40" height="24.0" fill="#72bf44"/><rect x="1082.60" y="372.20" width="35.40" height="18.50" fill="#ffb347"/><rect x="1082.60" y="372.20" width="35.40" height="3.30" fill="#00e0e0"/><rect x="1082.60" y="400.40" width="60.20" height="24.0" fill="#72bf44"/><rect x="1082.60" y="400.40" width="60.20" height="18.10" fill="#ffb347"/><rect x="1082.60" y="400.40" width="60.20" height="3.20" fill="#00e0e0"/><rect x="1082.60" y="428.40" width="3.00" height="24.00" fill="#ffb347"/><rect x="1082.60" y="428.40" width="3.00" height="3.20" fill="#00e0e0"/><rect x="1085.60" y="428.40" width="60.40" height="24.0" fill="#72bf44"/><rect x="1085.60" y="428.40" width="60.40" height="18.20" fill="#ffb347"/><rect x="1085.60" y="428.40" width="60.40" height="3.20" fill="#00e0e0"/><rect x="1082.60" y="456.50" width="10.30" height="24.00" fill="#ffb347"/><rect x="1082.60" y="456.50" width="10.30" height="4.00" fill="#00e0e0"/><rect x="1092.90" y="456.50" width="41.50" height="24.0" fill="#72bf44"/><rect x="1092.90" y="456.50" width="41.50" height="17.50" fill="#ffb347"/><rect x="1092.90" y="456.50" width="41.50" height="3.00" fill="#00e0e0"/><rect x="1082.60" y="484.70" width="12.30" height="24.00" fill="#ffb347"/><rect x="1082.60" y="484.70" width="12.30" height="3.20" fill="#00e0e0"/><rect x="1094.90" y="484.70" width="4.70" height="24.0" fill="#72bf44"/><rect x="1094.90" y="484.70" width="4.70" height="18.00" fill="#ffb347"/><rect x="1094.90" y="484.70" width="4.70" height="3.00" fill="#00e0e0"/><rect x="1099.60" y="484.70" width="16.70" height="24.0" fill="#72bf44"/><rect x="1082.60" y="512.90" width="217.40" height="24.0" fill="#72bf44"/><rect x="1082.60" y="512.90" width="217.40" height="6.50" fill="#ffb347"/><rect x="1300.00" y="512.90" width="4.40" height="24.0" fill="#72bf44"/><rect x="1082.60" y="541.10" width="230.20" height="24.0" fill="#72bf44"/><rect x="1082.60" y="541.10" width="230.20" height="6.50" fill="#ffb347"/><rect x="1179.00" y="512.90" width="7.20" height="24.0" fill="#00e0e0"/><rect x="1226.80" y="512.90" width="5.80" height="24.0" fill="#00e0e0"/><rect x="1150.50" y="541.10" width="3.80" height="24.0" fill="#00e0e0"/><rect x="1161.20" y="541.10" width="1.60" height="24.0" fill="#00e0e0"/><rect x="1171.80" y="541.10" width="3.60" height="24.0" fill="#00e0e0"/><rect x="1195.10" y="541.10" width="2.80" height="24.0" fill="#00e0e0"/><rect x="1200.90" y="541.10" width="2.80" height="24.0" fill="#00e0e0"/><rect x="1210.40" y="541.10" width="5.00" height="24.0" fill="#00e0e0"/><rect x="1222.20" y="541.10" width="2.80" height="24.0" fill="#00e0e0"/><rect x="1258.40" y="541.1" width="4.5" height="6.5" fill="#72bf44"/></svg><div class="t" style="left:996px;top:265.09999999999997px;">full house</div><div class="t" style="left:1145.9px;top:265.09999999999997px;">0.36 (<span style="color:#6a9fd0">0</span><span style="color:#e6e6e6">/</span><span style="color:#e070e0">0</span><span style="color:#e6e6e6">/</span><span style="color:#50d0d0">0.05</span><span style="color:#e6e6e6">/</span><span style="color:#f0c080">0.19</span><span style="color:#e6e6e6">/</span><span style="color:#6ab0e8">0</span><span style="color:#e6e6e6">/</span><span style="color:#a0d080">0.12</span>)</div><div class="t" style="left:996px;top:293.3px;">flush</div><div class="t" style="left:1239.0px;top:293.3px;">0.92 (<span style="color:#6a9fd0">0</span><span style="color:#e6e6e6">/</span><span style="color:#e070e0">0</span><span style="color:#e6e6e6">/</span><span style="color:#50d0d0">0.13</span><span style="color:#e6e6e6">/</span><span style="color:#f0c080">0.52</span><span style="color:#e6e6e6">/</span><span style="color:#6ab0e8">0</span><span style="color:#e6e6e6">/</span><span style="color:#a0d080">0.27</span>)</div><div class="t" style="left:996px;top:321.5px;">straight</div><div class="t" style="left:1131.6px;top:321.5px;">0.24 (<span style="color:#6a9fd0">0</span><span style="color:#e6e6e6">/</span><span style="color:#e070e0">0</span><span style="color:#e6e6e6">/</span><span style="color:#50d0d0">0.04</span><span style="color:#e6e6e6">/</span><span style="color:#f0c080">0.15</span><span style="color:#e6e6e6">/</span><span style="color:#6ab0e8">0</span><span style="color:#e6e6e6">/</span><span style="color:#a0d080">0.05</span>)</div><div class="t" style="left:996px;top:349.7px;">3 of a kind</div><div class="t" style="left:1134.7px;top:349.7px;">0.27 (<span style="color:#6a9fd0">0</span><span style="color:#e6e6e6">/</span><span style="color:#e070e0">0</span><span style="color:#e6e6e6">/</span><span style="color:#50d0d0">0.06</span><span style="color:#e6e6e6">/</span><span style="color:#f0c080">0.21</span><span style="color:#e6e6e6">/</span><span style="color:#6ab0e8">0</span><span style="color:#e6e6e6">/</span><span style="color:#a0d080">0</span>)</div><div class="t" style="left:996px;top:377.9px;">overpair</div><div class="t" style="left:1126.9px;top:377.9px;">0.21 (<span style="color:#6a9fd0">0</span><span style="color:#e6e6e6">/</span><span style="color:#e070e0">0</span><span style="color:#e6e6e6">/</span><span style="color:#50d0d0">0.03</span><span style="color:#e6e6e6">/</span><span style="color:#f0c080">0.12</span><span style="color:#e6e6e6">/</span><span style="color:#6ab0e8">0</span><span style="color:#e6e6e6">/</span><span style="color:#a0d080">0.05</span>)</div><div class="t" style="left:996px;top:406.09999999999997px;">two pair</div><div class="t" style="left:1151.7px;top:406.09999999999997px;">0.35 (<span style="color:#6a9fd0">0</span><span style="color:#e6e6e6">/</span><span style="color:#e070e0">0</span><span style="color:#e6e6e6">/</span><span style="color:#50d0d0">0.05</span><span style="color:#e6e6e6">/</span><span style="color:#f0c080">0.21</span><span style="color:#e6e6e6">/</span><span style="color:#6ab0e8">0</span><span style="color:#e6e6e6">/</span><span style="color:#a0d080">0.09</span>)</div><div class="t" style="left:996px;top:434.09999999999997px;">top pair</div><div class="t" style="left:1154.9px;top:434.09999999999997px;">0.37 (<span style="color:#6a9fd0">0</span><span style="color:#e6e6e6">/</span><span style="color:#e070e0">0</span><span style="color:#e6e6e6">/</span><span style="color:#50d0d0">0.05</span><span style="color:#e6e6e6">/</span><span style="color:#f0c080">0.23</span><span style="color:#e6e6e6">/</span><span style="color:#6ab0e8">0</span><span style="color:#e6e6e6">/</span><span style="color:#a0d080">0.09</span>)</div><div class="t" style="left:996px;top:462.2px;">middle pair</div><div class="t" style="left:1143.3px;top:462.2px;">0.31 (<span style="color:#6a9fd0">0</span><span style="color:#e6e6e6">/</span><span style="color:#e070e0">0</span><span style="color:#e6e6e6">/</span><span style="color:#50d0d0">0.05</span><span style="color:#e6e6e6">/</span><span style="color:#f0c080">0.2</span><span style="color:#e6e6e6">/</span><span style="color:#6ab0e8">0</span><span style="color:#e6e6e6">/</span><span style="color:#a0d080">0.06</span>)</div><div class="t" style="left:996px;top:490.4px;">weak pair</div><div class="t" style="left:1125.2px;top:490.4px;">0.25 (<span style="color:#6a9fd0">0</span><span style="color:#e6e6e6">/</span><span style="color:#e070e0">0</span><span style="color:#e6e6e6">/</span><span style="color:#50d0d0">0.02</span><span style="color:#e6e6e6">/</span><span style="color:#f0c080">0.08</span><span style="color:#e6e6e6">/</span><span style="color:#6ab0e8">0</span><span style="color:#e6e6e6">/</span><span style="color:#a0d080">0.15</span>)</div><div class="t" style="left:996px;top:518.6px;">A high</div><div class="t" style="left:1313.3px;top:518.6px;">1.29 (<span style="color:#6a9fd0">0</span><span style="color:#e6e6e6">/</span><span style="color:#e070e0">0</span><span style="color:#e6e6e6">/</span><span style="color:#50d0d0">0.08</span><span style="color:#e6e6e6">/</span><span style="color:#f0c080">0.33</span><span style="color:#e6e6e6">/</span><span style="color:#6ab0e8">0</span><span style="color:#e6e6e6">/</span><span style="color:#a0d080">0.89</span>)</div><div class="t" style="left:996px;top:546.8000000000001px;">no made hand</div><div class="t" style="left:1321.7px;top:546.8000000000001px;">1.35 (<span style="color:#6a9fd0">0</span><span style="color:#e6e6e6">/</span><span style="color:#e070e0">0</span><span style="color:#e6e6e6">/</span><span style="color:#50d0d0">0.13</span><span style="color:#e6e6e6">/</span><span style="color:#f0c080">0.32</span><span style="color:#e6e6e6">/</span><span style="color:#6ab0e8">0</span><span style="color:#e6e6e6">/</span><span style="color:#a0d080">0.89</span>)</div></body></html>
